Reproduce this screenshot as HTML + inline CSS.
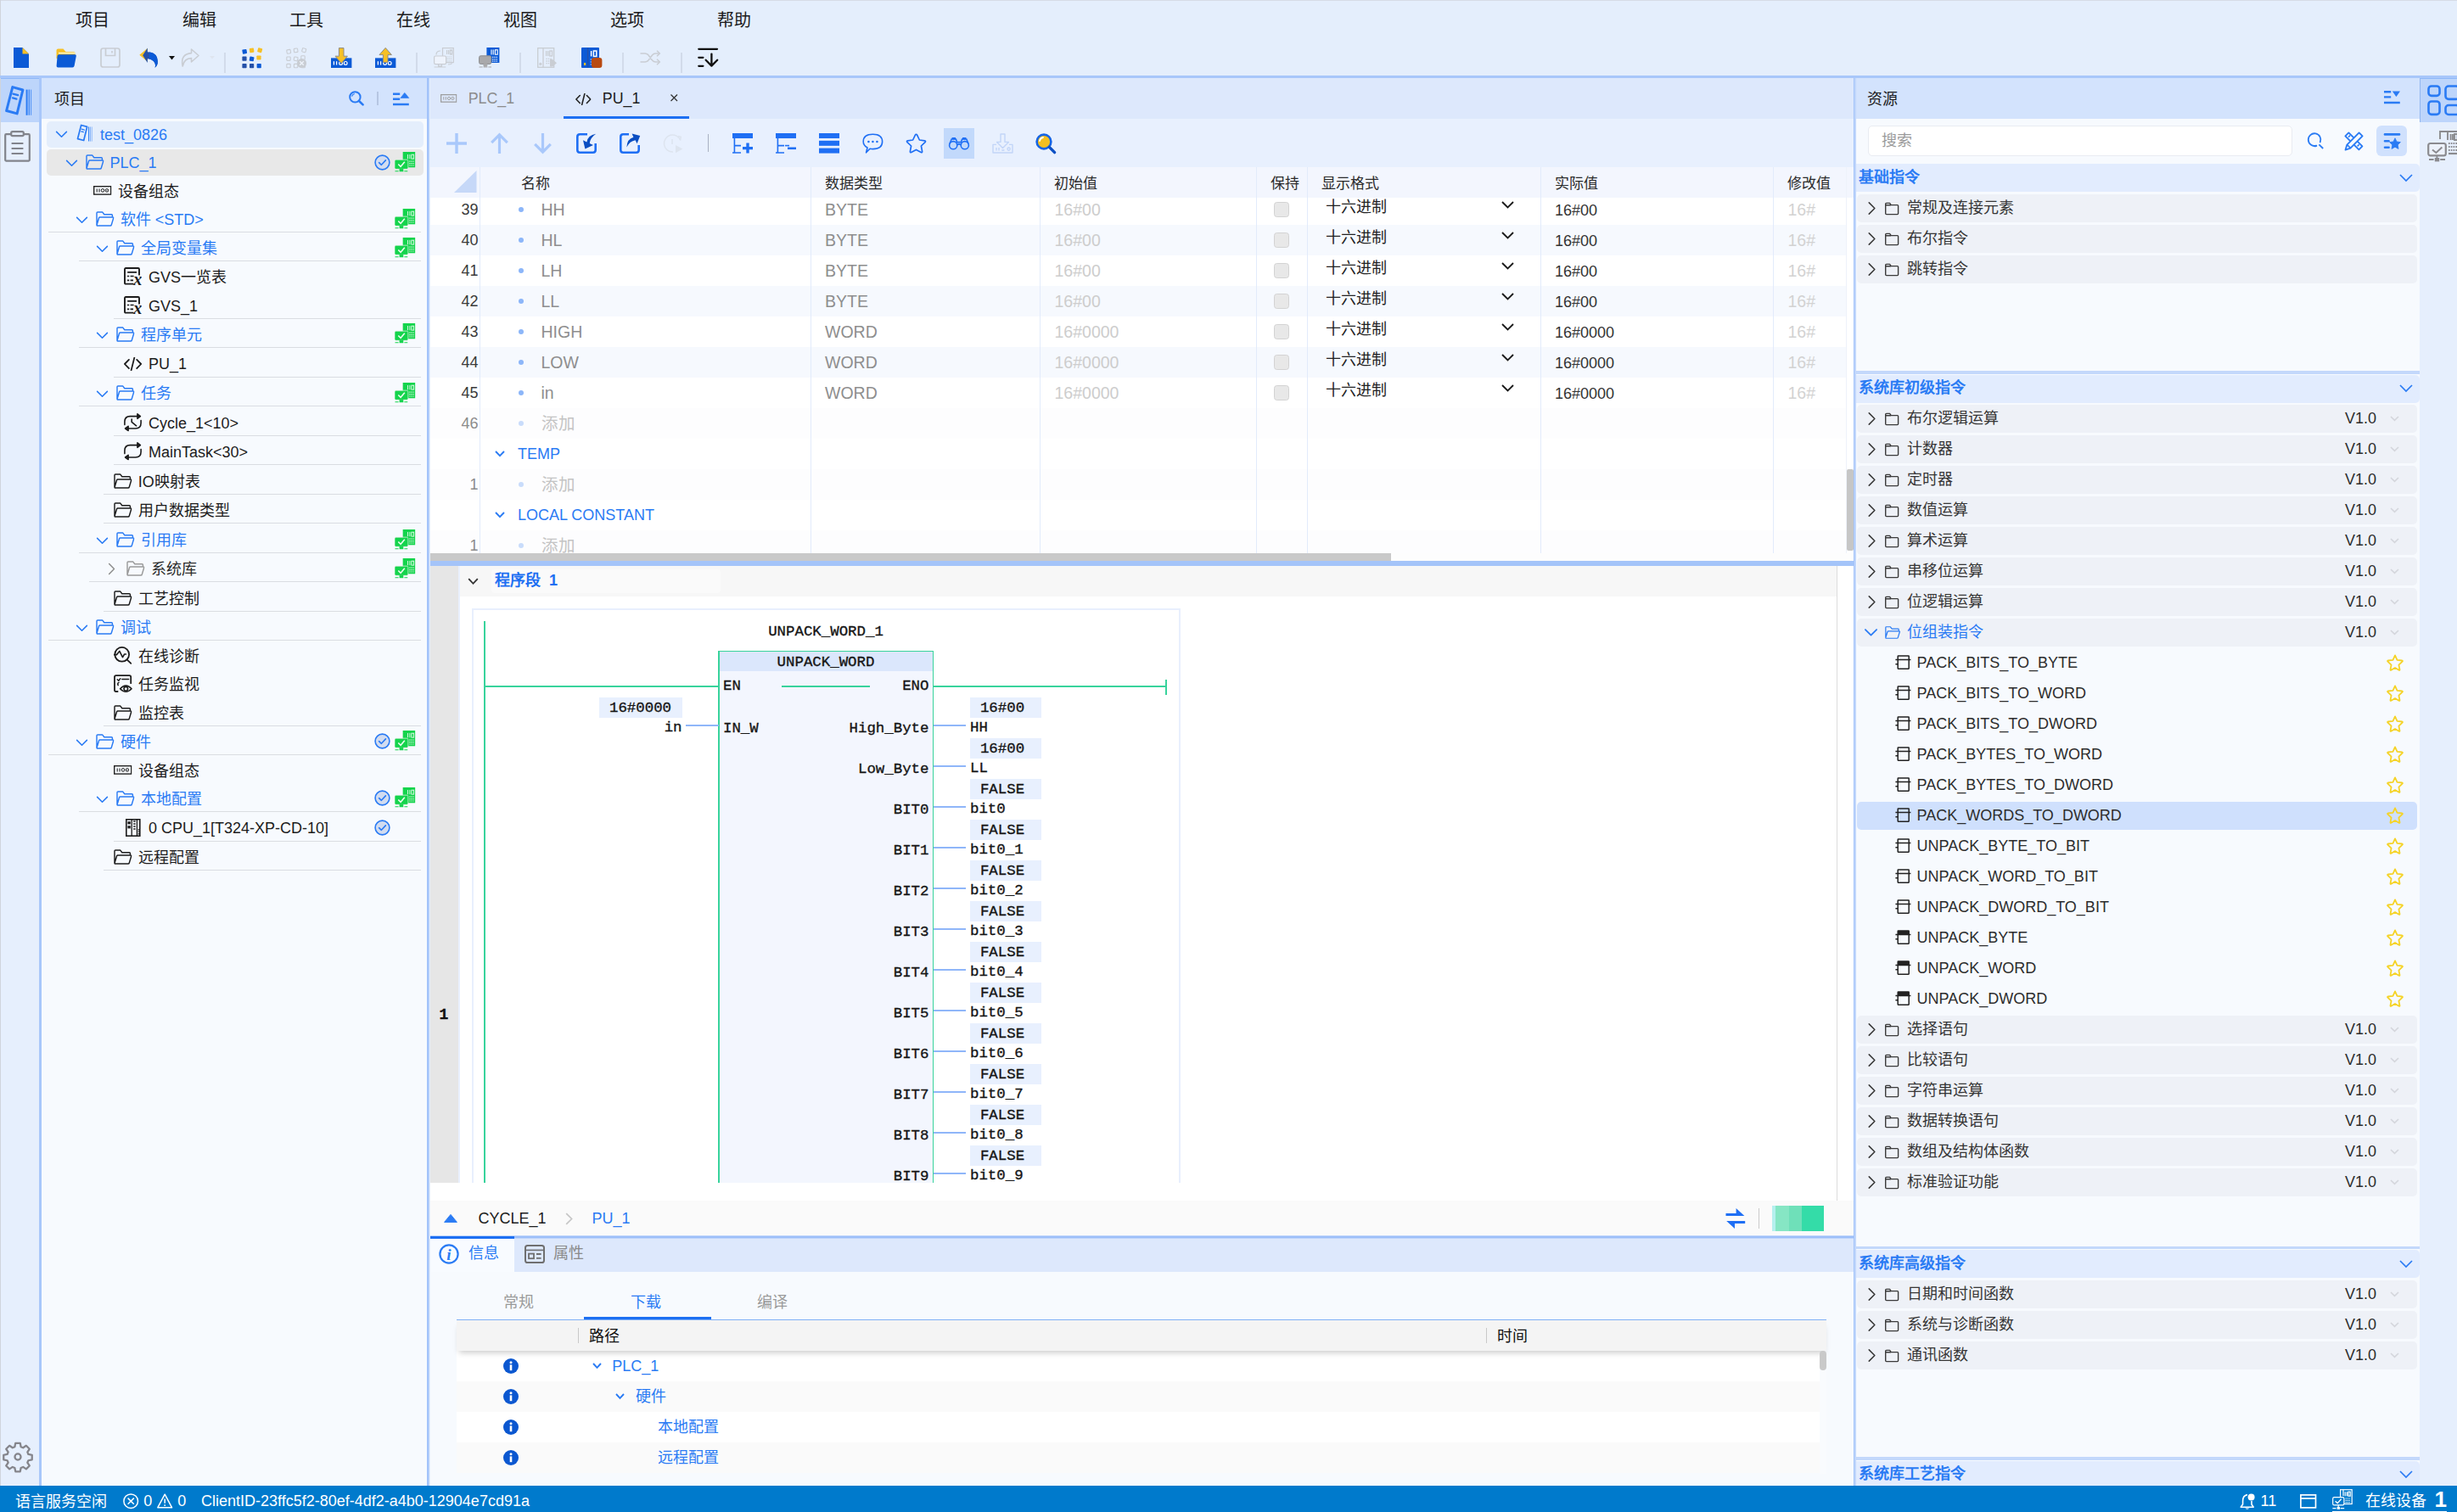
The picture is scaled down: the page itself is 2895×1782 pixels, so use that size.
<!DOCTYPE html>
<html lang="zh-CN"><head><meta charset="utf-8"><title>IDE</title><style>
html,body{margin:0;padding:0}
body{width:2895px;height:1782px;overflow:hidden;position:relative;background:#e4eefc;font-family:"Liberation Sans",sans-serif;}
div{position:absolute;box-sizing:border-box}
.t{white-space:nowrap}
.i{position:absolute;overflow:visible}
</style></head><body>
<svg width="0" height="0" style="position:absolute"><defs><symbol id="cd" viewBox="0 0 17 17"><path d="M2.6 5.4 L8.5 11.3 L14.4 5.4" fill="none" stroke="currentColor" stroke-width="1.55" stroke-linecap="round" stroke-linejoin="round"/></symbol><symbol id="cr" viewBox="0 0 17 17"><path d="M5.6 2.6 L11.5 8.5 L5.6 14.4" fill="none" stroke="currentColor" stroke-width="1.4" stroke-linecap="round" stroke-linejoin="round"/></symbol><symbol id="fo" viewBox="0 0 21.5 18"><path d="M1 16 V1.9 Q1 .9 2 .9 H7.6 L9.8 3.8 H18.4 Q19.4 3.8 19.4 4.8 V6.8 M4.7 7 H19.9 Q21 7 20.7 8 L18.3 16 Q18 17 17 17 H1.9 Q.8 17 1.1 16 L3.6 7.8 Q3.9 7 4.7 7Z" fill="none" stroke="currentColor" stroke-width="1.45" stroke-linejoin="round"/></symbol><symbol id="fc" viewBox="0 0 21 21"><path d="M3.7 16.6 V5.4 Q3.7 4.4 4.7 4.4 H8.6 L10.2 6.6 H17.6 Q18.6 6.6 18.6 7.6 V16.6 Q18.6 17.6 17.6 17.6 H4.7 Q3.7 17.6 3.7 16.6 Z M3.7 6.8 H10" fill="none" stroke="currentColor" stroke-width="1.4" stroke-linejoin="round"/></symbol><symbol id="dev" viewBox="0 0 21.5 11"><rect x=".7" y=".7" width="20" height="9.4" fill="none" stroke="currentColor" stroke-width="1.35"/><path d="M4.2 3.4v4M7 3.4v4" stroke="currentColor" stroke-width="1.05"/><circle cx="11" cy="5.4" r="1.8" fill="none" stroke="currentColor" stroke-width="1"/><circle cx="15.9" cy="5.4" r="1.8" fill="none" stroke="currentColor" stroke-width="1"/><circle cx="15.9" cy="5.4" r=".5" fill="currentColor"/></symbol><symbol id="prj" viewBox="0 0 33 37"><g fill="none" stroke="currentColor"><path d="M9.8 2.6 L21.9 6 L15.1 33.9 L2.6 30.5 Z" stroke-width="3" stroke-linejoin="round"/><path d="M10.4 10.6 L16.2 12.2 M10 15.4 L14.4 16.6" stroke-width="2.3" stroke-linecap="round"/><path d="M26.6 5.6 V35.8" stroke-width="2"/><path d="M29.3 5.6 V35.8" stroke-width="1.2"/><path d="M31.6 5.6 V35.8" stroke-width="1" opacity=".75"/></g></symbol><symbol id="prjs" viewBox="0 0 33 37"><g fill="none" stroke="currentColor"><path d="M9.8 2.6 L21.9 6 L15.1 33.9 L2.6 30.5 Z" stroke-width="3" stroke-linejoin="round"/><path d="M10.4 10.6 L16.2 12.2 M10 15.4 L14.4 16.6" stroke-width="2.3" stroke-linecap="round"/><path d="M25.4 6 V35.8" stroke-width="1.9"/><path d="M28.9 6 V35.8" stroke-width="1.7" opacity=".6"/><path d="M32 6 V35.8" stroke-width="1.6" opacity=".4"/></g></symbol><symbol id="gvs" viewBox="0 0 21 21"><g fill="none" stroke="currentColor" stroke-width="1.9"><path d="M11.4 19.6 H2.2 Q1 19.6 1 18.4 V2.2 Q1 1 2.2 1 H16.8 Q18 1 18 2.2 V9.6"/><path d="M4.2 5.8 H15 M4 10.5 h2.2 M7.6 10.5 h4 M4 15.3 h2.2 M7.6 15.3 h3.4" stroke-width="1.7"/></g><text x="11.2" y="21" font-family="Liberation Serif" font-style="italic" font-weight="bold" font-size="20" fill="currentColor">x</text></symbol><symbol id="code" viewBox="0 0 21 16"><path d="M5.9 2.9 L.9 8 L5.9 13.2 M15.2 2.9 L20.2 8 L15.2 13.2 M12.3 .6 L8.6 15.4" fill="none" stroke="currentColor" stroke-width="1.8" stroke-linecap="round" stroke-linejoin="round"/></symbol><symbol id="cyc" viewBox="0 0 21 21.5"><g fill="none" stroke="currentColor" stroke-width="1.6" stroke-linecap="round" stroke-linejoin="round"><path d="M.9 13.6 V10 Q.9 3.6 7.3 3.6 H18.8 M15.9 .9 L19.4 3.6 L15.9 6.3 Z M20.1 8.6 V11.6 Q20.1 18 13.7 18 H2.2 M5.1 15.3 L1.6 18 L5.1 20.7 Z"/><path d="M9.2 7 V10.4 L14.6 14.8" stroke-width="1.6"/></g></symbol><symbol id="loop" viewBox="0 0 21 21.5"><g fill="none" stroke="currentColor" stroke-width="1.6" stroke-linecap="round" stroke-linejoin="round"><path d="M.9 13.6 V10 Q.9 3.6 7.3 3.6 H18.8 M15.9 .9 L19.4 3.6 L15.9 6.3 Z M20.1 8.6 V11.6 Q20.1 18 13.7 18 H2.2 M5.1 15.3 L1.6 18 L5.1 20.7 Z"/></g></symbol><symbol id="diag" viewBox="0 0 21 21"><g fill="none" stroke="currentColor" stroke-width="1.8" stroke-linecap="round" stroke-linejoin="round"><circle cx="9.7" cy="9.3" r="8.4"/><path d="M15.8 15.6 L20.3 19.9"/><path d="M.6 9.6 H3.6 L6.8 5.4 L10.5 12.6 L12.6 9 H14.4" stroke-width="1.6"/></g></symbol><symbol id="mon" viewBox="0 0 22 22"><g fill="none" stroke="currentColor" stroke-width="1.8" stroke-linecap="round" stroke-linejoin="round"><path d="M4.6 20 H2.8 Q1 20 1 18.2 V2.9 Q1 1.1 2.8 1.1 H18.4 Q20.2 1.1 20.2 2.9 V10.2"/><path d="M4.2 5.8 L5.8 7.2 L7.8 4.8 M9.8 5.6 H17.6 M6 9.4 Q4 10.4 5.2 12.6" stroke-width="1.5"/><path d="M7.6 16.7 Q14.3 9.6 21 16.7 Q14.3 23.8 7.6 16.7Z" stroke-width="1.6"/><circle cx="14.3" cy="16.7" r="2.3" stroke-width="1.6"/></g></symbol><symbol id="cpu" viewBox="0 0 18 21"><g fill="none" stroke="currentColor" stroke-width="1.6"><rect x=".8" y=".8" width="16" height="19.4"/><path d="M7.2 .8 V20.2 M13.4 .8 V20.2" stroke-width="1.3"/><path d="M9.2 3 h2.4 M9.2 6 h2.4 M9.2 9 h2.4 M9.2 12 h2.4 M14.6 13 h2 M14.6 15.4 h2 M14.6 17.8 h2" stroke-width="1.4"/></g><rect x="2.4" y="3.2" width="3.4" height="3.2" fill="currentColor"/><rect x="2.4" y="8.2" width="3.4" height="3.2" fill="currentColor"/></symbol><symbol id="ck" viewBox="0 0 19 19"><circle cx="9.5" cy="9.5" r="8.4" fill="#d2dcf0" stroke="#2a7bf4" stroke-width="1.6"/><path d="M5.6 9.7 L8.4 12.3 L13.4 6.9" fill="none" stroke="#2a7bf4" stroke-width="1.6" stroke-linecap="round" stroke-linejoin="round"/></symbol><symbol id="grn" viewBox="0 0 24 24"><rect x="9.5" y="0" width="14.5" height="18" fill="#14d44c"/><path d="M15.2 3 V8.2 M17.6 3 V8.2" stroke="#d9f7e2" stroke-width="1"/><rect x="19.6" y="3.2" width="2.6" height="4.8" fill="none" stroke="#d9f7e2" stroke-width="1"/><path d="M17 11 H22.4 M17 13.4 H22.4 M17 15.8 H22.4" stroke="#d9f7e2" stroke-width="1.1" stroke-dasharray="1.3 .8"/><rect x="0" y="9" width="15.6" height="11" rx="1.6" fill="#14d44c" stroke="#eaf3ea" stroke-width=".7"/><path d="M4.2 14.2 L7 17 L11.6 11.6" fill="none" stroke="#eefcf0" stroke-width="1.5"/><path d="M6 20 h3.6 v2.2 h-3.6z M0.5 22.4 H4.5 M5.5 22.4 H10.2 M11.2 22.4 H15" fill="#14d44c" stroke="#14d44c" stroke-width="1"/></symbol></defs></svg>
<div style="left:0px;top:0px;width:2895px;height:90px;background:#e4eefc;"></div>
<div style="left:0px;top:0px;width:2895px;height:1px;background:#d6dbe6;"></div>
<div style="left:0px;top:0px;width:1px;height:1782px;background:#d0d4dc;"></div>
<div style="left:0px;top:89px;width:2895px;height:3.2px;background:#a8c7fa;"></div>
<div class="t" style="top:10.5px;font-size:20px;line-height:26px;color:#1b1b1b;left:109px;transform:translateX(-50%);">项目</div>
<div class="t" style="top:10.5px;font-size:20px;line-height:26px;color:#1b1b1b;left:235px;transform:translateX(-50%);">编辑</div>
<div class="t" style="top:10.5px;font-size:20px;line-height:26px;color:#1b1b1b;left:361px;transform:translateX(-50%);">工具</div>
<div class="t" style="top:10.5px;font-size:20px;line-height:26px;color:#1b1b1b;left:487px;transform:translateX(-50%);">在线</div>
<div class="t" style="top:10.5px;font-size:20px;line-height:26px;color:#1b1b1b;left:613px;transform:translateX(-50%);">视图</div>
<div class="t" style="top:10.5px;font-size:20px;line-height:26px;color:#1b1b1b;left:739px;transform:translateX(-50%);">选项</div>
<div class="t" style="top:10.5px;font-size:20px;line-height:26px;color:#1b1b1b;left:865px;transform:translateX(-50%);">帮助</div>
<svg class="i" style="left:16px;top:56px;" width="18" height="24" viewBox="0 0 18 24"><path d="M0 0 H10.5 L18 7.5 V24 H0 Z" fill="#0b5ad6"/><path d="M10.5 0 L18 7.5 H10.5 Z" fill="#f6c026"/></svg>
<svg class="i" style="left:66px;top:57px;" width="24" height="23" viewBox="0 0 24 23"><path d="M0.5 2.5 Q0.5 0.5 2.5 0.5 H8.5 L11.5 4 H21 Q22.5 4 22.5 5.5 V12 H0.5 Z" fill="#f6c026"/><path d="M3 5.6 H22.5" stroke="#fff7d6" stroke-width="1.6"/><path d="M3.4 7.2 H22.4 Q24.2 7.2 23.8 9 L21.6 20.6 Q21.2 22.5 19.4 22.5 H2.4 Q0.4 22.5 0.6 20.5 L1.6 9 Q1.8 7.2 3.4 7.2 Z" fill="#0b5ad6"/></svg>
<svg class="i" style="left:118px;top:56px;" width="24" height="24" viewBox="0 0 24 24"><g fill="none" stroke="#c9cdd3" stroke-width="1.7"><rect x="1" y="1" width="22" height="22" rx="2.6"/><path d="M6.5 1 V9.5 H17.5 V1"/><path d="M14 4 V6.5"/></g></svg>
<svg class="i" style="left:164px;top:56px;" width="23" height="24" viewBox="0 0 23 24"><path d="M.3 8.8 L9.6 1 V16.6 Z" fill="#f6c026"/><path d="M4.2 9.2 L9.8 0.4 V5.2 Q21.5 5.6 21.8 16.5 Q22 21 18.6 23.8 Q20 19.5 17 16.2 Q14.4 13.4 9.8 13.2 V18 Z" fill="#2450a8"/><path d="M12 5.4 Q21.5 6.2 21.8 16.5 Q22 21 18.6 23.8 Q20 19.5 17 16.2 Q15.5 14.4 12 13.4Z" fill="#0b5ad6"/></svg>
<svg class="i" style="left:198.5px;top:65.5px;" width="7" height="5" viewBox="0 0 7 5"><path d="M0 0 H7 L3.5 4.6 Z" fill="#111"/></svg>
<svg class="i" style="left:213px;top:57px;" width="22" height="22" viewBox="0 0 22 22"><path d="M12.5 1 L21 8.5 L12.5 16 V11.6 Q4 11.6 2.2 21 Q-0.8 6.6 12.5 5.6 Z" fill="none" stroke="#c9cdd3" stroke-width="1.6" stroke-linejoin="round"/></svg>
<svg class="i" style="left:247px;top:66px;" width="6" height="4" viewBox="0 0 6 4"><path d="M0 0 H6 L3 3.6 Z" fill="#dfe5ef"/></svg>
<div style="left:263.5px;top:62px;width:2px;height:24px;background:#d2dbea;"></div>
<svg class="i" style="left:284.5px;top:56px;" width="25" height="25" viewBox="0 0 25 25"><rect x="0.6" y="2.2" width="5.2" height="5.2" rx=".8" fill="#0b5ad6" transform="rotate(-10 3.2 4.800000000000001)"/><rect x="9" y="0.8" width="5.2" height="5.2" rx=".8" fill="#f6c026" transform="rotate(-8 11.6 3.4000000000000004)"/><rect x="18.6" y="0.6" width="5.2" height="5.2" rx=".8" fill="#f6c026" transform="rotate(15 21.200000000000003 3.2)"/><rect x="0.4" y="10.6" width="5.2" height="5.2" rx=".8" fill="#2450a8" transform="rotate(0 3.0 13.2)"/><rect x="9" y="10.8" width="5.2" height="5.2" rx=".8" fill="#0b5ad6" transform="rotate(10 11.6 13.4)"/><rect x="17.4" y="9.4" width="5.2" height="5.2" rx=".8" fill="#f6c026" transform="rotate(0 20.0 12.0)"/><rect x="0.4" y="19" width="5.2" height="5.2" rx=".8" fill="#2450a8" transform="rotate(0 3.0 21.6)"/><rect x="9" y="19" width="5.2" height="5.2" rx=".8" fill="#2450a8" transform="rotate(0 11.6 21.6)"/><rect x="17.6" y="19" width="5.2" height="5.2" rx=".8" fill="#0b5ad6" transform="rotate(0 20.200000000000003 21.6)"/></svg>
<svg class="i" style="left:337px;top:56px;" width="25" height="25" viewBox="0 0 25 25"><rect x="1.0" y="2.6" width="4.4" height="4.4" rx=".8" fill="none" stroke="#c9cdd3" stroke-width="1.1" transform="rotate(-10 3.2 4.800000000000001)"/><rect x="9.4" y="1.2000000000000002" width="4.4" height="4.4" rx=".8" fill="none" stroke="#c9cdd3" stroke-width="1.1" transform="rotate(-8 11.6 3.4000000000000004)"/><rect x="19.0" y="1.0" width="4.4" height="4.4" rx=".8" fill="none" stroke="#c9cdd3" stroke-width="1.1" transform="rotate(15 21.200000000000003 3.2)"/><rect x="0.8" y="11.0" width="4.4" height="4.4" rx=".8" fill="none" stroke="#c9cdd3" stroke-width="1.1" transform="rotate(0 3.0 13.2)"/><rect x="9.4" y="11.200000000000001" width="4.4" height="4.4" rx=".8" fill="none" stroke="#c9cdd3" stroke-width="1.1" transform="rotate(10 11.6 13.4)"/><rect x="17.799999999999997" y="9.8" width="4.4" height="4.4" rx=".8" fill="none" stroke="#c9cdd3" stroke-width="1.1" transform="rotate(0 20.0 12.0)"/><rect x="0.8" y="19.4" width="4.4" height="4.4" rx=".8" fill="none" stroke="#c9cdd3" stroke-width="1.1" transform="rotate(0 3.0 21.6)"/><rect x="9.4" y="19.4" width="4.4" height="4.4" rx=".8" fill="none" stroke="#c9cdd3" stroke-width="1.1" transform="rotate(0 11.6 21.6)"/><rect x="18.0" y="19.4" width="4.4" height="4.4" rx=".8" fill="none" stroke="#c9cdd3" stroke-width="1.1" transform="rotate(0 20.200000000000003 21.6)"/><circle cx="18.5" cy="18.5" r="5.6" fill="#c9cdd3"/><path d="M16.2 16.2 L20.8 20.8 M20.8 16.2 L16.2 20.8" stroke="#eef3fb" stroke-width="1.3"/></svg>
<svg class="i" style="left:389.7px;top:56px;" width="25" height="24" viewBox="0 0 25 24"><rect x="0" y="12.4" width="24.4" height="11.6" fill="#0b5ad6"/><path d="M3.4 16.2v4.4M6.6 16.2v4.4" stroke="#fff" stroke-width="1.3"/><circle cx="17.2" cy="18.4" r="1.9" fill="none" stroke="#fff" stroke-width="1.2"/><circle cx="11.6" cy="18.4" r="1.9" fill="none" stroke="#fff" stroke-width="1.2"/><path d="M12.2 18.6 L19.4 10.2 H15 V0.6 H9.4 V10.2 H5 Z" fill="#f6c026" stroke="#8d8a86" stroke-width="1" stroke-linejoin="round"/></svg>
<svg class="i" style="left:441.8px;top:56px;" width="25" height="24" viewBox="0 0 25 24"><rect x="0" y="12.4" width="24.4" height="11.6" fill="#0b5ad6"/><path d="M3.4 16.2v4.4M6.6 16.2v4.4" stroke="#fff" stroke-width="1.3"/><circle cx="17.2" cy="18.4" r="1.9" fill="none" stroke="#fff" stroke-width="1.2"/><circle cx="11.6" cy="18.4" r="1.9" fill="none" stroke="#fff" stroke-width="1.2"/><path d="M12.2 0.4 L19.4 8.6 H15 V17.4 H9.4 V8.6 H5 Z" fill="#f6c026" stroke="#8d8a86" stroke-width="1" stroke-linejoin="round"/></svg>
<div style="left:490px;top:62px;width:2px;height:24px;background:#d2dbea;"></div>
<svg class="i" style="left:511px;top:56px;" width="24" height="24" viewBox="0 0 24 24"><g fill="none" stroke="#c9cdd3" stroke-width="1.2"><rect x="10.5" y=".6" width="12.8" height="17"/><path d="M15.6 3v5M17.6 3v5"/><rect x="19.4" y="3" width="2.2" height="5"/><path d="M15.5 11h6.4M15.5 13.4h6.4M15.5 15.8h6.4" stroke-dasharray="1.2 .9"/><rect x=".6" y="10" width="14" height="9.6" rx="1.6" fill="#eef3fc"/><path d="M5.6 19.6 v2.6 h3.8 v-2.6 M.6 23h13.6" /><path d="M3 8.5 Q3 4 8 4 M17 20 q4 0 4.6-1.6"/></g></svg>
<svg class="i" style="left:564px;top:56px;" width="25" height="24" viewBox="0 0 25 24"><rect x="9.4" y="0" width="15" height="18" fill="#0b5ad6"/><path d="M15 2.6v6M17.2 2.6v6" stroke="#fff" stroke-width="1.1"/><rect x="19.4" y="2.8" width="2.8" height="5.4" fill="none" stroke="#fff" stroke-width="1.1"/><path d="M16 11.4h6.8M16 13.8h6.8M16 16.2h6.8" stroke="#dfe9fb" stroke-width="1.2" stroke-dasharray="1.4 .9"/><rect x=".6" y="9.8" width="14.2" height="9.6" rx="1.8" fill="#a9a9ab" stroke="#8c8c8e" stroke-width="1"/><path d="M6 19.6h3.8v2.6H6z M.6 23h4M5.6 23h4.8M11.4 23h3.6" fill="#a9a9ab" stroke="#a9a9ab" stroke-width="1"/></svg>
<div style="left:611.6px;top:62px;width:2px;height:24px;background:#d2dbea;"></div>
<svg class="i" style="left:633px;top:56px;" width="25" height="24" viewBox="0 0 25 24"><g fill="none" stroke="#c9cdd3" stroke-width="1.3"><rect x=".7" y=".7" width="19" height="22.6"/><path d="M7 .7V23.3"/><path d="M10.6 4v6M12.8 4v6"/><rect x="14.8" y="4" width="2.8" height="6"/><path d="M10.4 13.4h7.6M10.4 16h5M10.4 18.6h5" stroke-dasharray="1.4 1"/><circle cx="3.8" cy="19.4" r="1"/></g><path d="M15 14 h3 l5 4.2 l-5 4.2 h-3z" fill="#c9cdd3"/></svg>
<svg class="i" style="left:685px;top:56px;" width="25" height="24" viewBox="0 0 25 24"><rect x="0" y="0" width="21" height="24" rx="1" fill="#0b5ad6"/><path d="M7.6 .5V23.5" stroke="#2450a8" stroke-width="1.4"/><path d="M11.6 4v6.4" stroke="#fff" stroke-width="1.5"/><rect x="14.4" y="4" width="3.4" height="6.4" fill="none" stroke="#fff" stroke-width="1.5"/><path d="M10.6 14h3M10.6 17h3M10.6 20h3" stroke="#dfe9fb" stroke-width="1.2" stroke-dasharray="1.2 .8"/><rect x="3" y="18" width="2.2" height="3" fill="#f6c026"/><rect x="12" y="12" width="12.4" height="12" rx="3" fill="#b84a12"/></svg>
<div style="left:733px;top:62px;width:2px;height:24px;background:#d2dbea;"></div>
<svg class="i" style="left:753.5px;top:59px;" width="25" height="18" viewBox="0 0 25 18"><g fill="none" stroke="#c9cdd3" stroke-width="1.5" stroke-linejoin="round"><path d="M.5 4h5.5q2.4 0 4 2l4.5 6q1.6 2 4 2h4.5M.5 14h5.5q2.4 0 4-2l4.5-6q1.6-2 4-2h4.5"/><path d="M20 .8l3.4 3.2-3.4 3.2M20 10.8l3.4 3.2-3.4 3.2"/></g></svg>
<div style="left:802px;top:62px;width:2px;height:24px;background:#d2dbea;"></div>
<svg class="i" style="left:821.5px;top:56px;" width="25" height="24" viewBox="0 0 25 24"><g fill="none" stroke="#111" stroke-width="2.3" stroke-linecap="round" stroke-linejoin="round"><path d="M1.3 1.8H23M1.3 11.8H6.4M1.3 21.8H6.4"/><path d="M16.4 7.6V21.4M9.6 14.8l6.8 6.8 6.8-6.8"/></g></svg>
<div style="left:1px;top:92.2px;width:45px;height:1658.8px;background:#e6effd;"></div>
<div style="left:1px;top:92.2px;width:45px;height:51.5px;background:#bdd5fb;"></div>
<div style="left:1px;top:92.2px;width:45px;height:1px;background:#8fb9f7;"></div>
<div style="left:46px;top:92.2px;width:3px;height:1658.8px;background:#a8c7fa;"></div>
<svg class="i" style="left:5px;top:100px;color:#2a7bf4" width="33" height="37"><use href="#prj"/></svg>
<svg class="i" style="left:5px;top:154px;" width="31" height="37" viewBox="0 0 31 37"><g fill="none" stroke="#82848c" stroke-width="2.2"><path d="M8 4.2H2.2Q1.2 4.2 1.2 5.2V34.6Q1.2 35.6 2.2 35.6H28.8Q29.8 35.6 29.8 34.6V5.2Q29.8 4.2 28.8 4.2H23"/><rect x="8.2" y="1.2" width="14.6" height="5" rx="1.6"/><path d="M8.6 15H22.4M8.6 21H22.4M8.6 27H22.4"/></g></svg>
<svg class="i" style="left:3px;top:1698.6px;transform:scale(.985)" width="36" height="36" viewBox="0 0 36 36"><g fill="none" stroke="#85858b" stroke-width="2.3"><circle cx="18" cy="18" r="3.6"/><path d="M15.2 1.6h5.6l.9 4.4 2.6 1.1 3.7-2.5 4 4-2.5 3.7 1.1 2.6 4.4.9v5.6l-4.4.9-1.1 2.6 2.5 3.7-4 4-3.7-2.5-2.6 1.1-.9 4.4h-5.6l-.9-4.4-2.6-1.1-3.7 2.5-4-4 2.5-3.7-1.1-2.6-4.4-.9v-5.6l4.4-.9 1.1-2.6-2.5-3.7 4-4 3.7 2.5 2.6-1.1z" stroke-linejoin="round"/></g></svg>
<div style="left:49px;top:92.2px;width:454.5px;height:1658.8px;background:#f7fafe;"></div>
<div style="left:49px;top:92.2px;width:454.5px;height:47.5px;background:#d3e3fd;"></div>
<div class="t" style="top:105.8px;font-size:18px;line-height:23px;color:#1b1b1b;left:64px;">项目</div>
<svg class="i" style="left:411px;top:106.5px;" width="18" height="17" viewBox="0 0 18 17"><g fill="none" stroke="#2a7bf4" stroke-width="2"><circle cx="7.4" cy="7.4" r="6.2"/><path d="M12 12L16.6 16.4" stroke-width="2.6" stroke-linecap="round"/><path d="M3.6 6.6Q4.2 4 6.8 3.5" stroke-width="1.2"/></g></svg>
<div style="left:444px;top:108px;width:1.5px;height:16px;background:#b6c6e2;"></div>
<svg class="i" style="left:463px;top:108.5px;" width="19" height="15.5" viewBox="0 0 19 15.5"><path d="M0 .4H8.2V3H0zM0 6.4H8.2V9H0zM0 12.7H18.8V15.3H0z" fill="#2a7bf4"/><path d="M8.9 6.5L13.4 .7Q13.8 .2 14.2 .7L18.8 6.5z" fill="#2a7bf4" stroke="#2a7bf4" stroke-width=".6" stroke-linejoin="round"/></svg>
<div style="left:503.4px;top:92.2px;width:1.7px;height:1658.8px;background:#a2c3fa;"></div>
<div style="left:505.1px;top:92.2px;width:1.4px;height:1658.8px;background:#bdd4fb;"></div>
<div style="left:506.5px;top:92.2px;width:0.5px;height:1658.8px;background:#eef4fe;"></div>
<div style="left:55px;top:142.5px;width:444px;height:31px;background:#e4eefc;border-radius:5px;"></div>
<div style="left:55px;top:175.5px;width:444px;height:31.5px;background:#e8e8e8;border-radius:5px;"></div>
<svg class="i" style="left:63.8px;top:150.2px;color:#2a7bf4" width="17" height="17"><use href="#cd"/></svg>
<svg class="i" style="left:89.5px;top:146.39999999999998px;color:#2a7bf4" width="19" height="21.3"><use href="#prjs"/></svg>
<div class="t" style="top:147.5px;font-size:18px;line-height:23px;color:#2a7bf4;left:118px;">test_0826</div>
<svg class="i" style="left:75.8px;top:183.8px;color:#2a7bf4" width="17" height="17"><use href="#cd"/></svg>
<svg class="i" style="left:101px;top:181.9px;color:#2a7bf4" width="21.5" height="18"><use href="#fo"/></svg>
<div class="t" style="top:181.1px;font-size:18px;line-height:23px;color:#2a7bf4;left:129.5px;">PLC_1</div>
<svg class="i" style="left:440.5px;top:181.5px;" width="19" height="19"><use href="#ck"/></svg>
<svg class="i" style="left:465px;top:178.70000000000002px;" width="24.4" height="24.4"><use href="#grn"/></svg>
<svg class="i" style="left:109.7px;top:218.8px;color:#1c1c1c" width="21.5" height="11"><use href="#dev"/></svg>
<div class="t" style="top:214.8px;font-size:18px;line-height:23px;color:#1c1c1c;left:139.3px;">设备组态</div>
<svg class="i" style="left:88.1px;top:250.89999999999998px;color:#2a7bf4" width="17" height="17"><use href="#cd"/></svg>
<svg class="i" style="left:113px;top:248.99999999999997px;color:#2a7bf4" width="21.5" height="18"><use href="#fo"/></svg>
<div class="t" style="top:248.2px;font-size:18px;line-height:23px;color:#2a7bf4;left:141.8px;">软件 &lt;STD&gt;</div>
<svg class="i" style="left:465px;top:245.79999999999998px;" width="24.4" height="24.4"><use href="#grn"/></svg>
<div style="left:57px;top:273px;width:438.5px;height:1px;background:#dadde2;"></div>
<svg class="i" style="left:112.1px;top:284.7px;color:#2a7bf4" width="17" height="17"><use href="#cd"/></svg>
<svg class="i" style="left:136.8px;top:282.8px;color:#2a7bf4" width="21.5" height="18"><use href="#fo"/></svg>
<div class="t" style="top:282.0px;font-size:18px;line-height:23px;color:#2a7bf4;left:166px;">全局变量集</div>
<svg class="i" style="left:465px;top:279.59999999999997px;" width="24.4" height="24.4"><use href="#grn"/></svg>
<div style="left:92.5px;top:307px;width:403.0px;height:1px;background:#dadde2;"></div>
<svg class="i" style="left:146px;top:314.79999999999995px;color:#1c1c1c" width="21" height="21"><use href="#gvs"/></svg>
<div class="t" style="top:316.2px;font-size:18px;line-height:23px;color:#1c1c1c;left:175px;">GVS一览表</div>
<svg class="i" style="left:146px;top:348.59999999999997px;color:#1c1c1c" width="21" height="21"><use href="#gvs"/></svg>
<div class="t" style="top:350.0px;font-size:18px;line-height:23px;color:#1c1c1c;left:175px;">GVS_1</div>
<div style="left:134px;top:375px;width:361.5px;height:1px;background:#dadde2;"></div>
<svg class="i" style="left:112.3px;top:386.5px;color:#2a7bf4" width="17" height="17"><use href="#cd"/></svg>
<svg class="i" style="left:137px;top:384.6px;color:#2a7bf4" width="21.5" height="18"><use href="#fo"/></svg>
<div class="t" style="top:383.8px;font-size:18px;line-height:23px;color:#2a7bf4;left:166px;">程序单元</div>
<svg class="i" style="left:465px;top:381.4px;" width="24.4" height="24.4"><use href="#grn"/></svg>
<div style="left:92.5px;top:409px;width:403.0px;height:1px;background:#dadde2;"></div>
<svg class="i" style="left:146px;top:421.1px;color:#1c1c1c" width="21" height="16"><use href="#code"/></svg>
<div class="t" style="top:418.4px;font-size:18px;line-height:23px;color:#1c1c1c;left:175px;">PU_1</div>
<div style="left:134px;top:444px;width:361.5px;height:1px;background:#dadde2;"></div>
<svg class="i" style="left:112.3px;top:455.7px;color:#2a7bf4" width="17" height="17"><use href="#cd"/></svg>
<svg class="i" style="left:137px;top:453.8px;color:#2a7bf4" width="21.5" height="18"><use href="#fo"/></svg>
<div class="t" style="top:453.0px;font-size:18px;line-height:23px;color:#2a7bf4;left:166px;">任务</div>
<svg class="i" style="left:465px;top:450.59999999999997px;" width="24.4" height="24.4"><use href="#grn"/></svg>
<div style="left:92.5px;top:478px;width:403.0px;height:1px;background:#dadde2;"></div>
<svg class="i" style="left:146px;top:486.9px;color:#1c1c1c" width="21" height="21.5"><use href="#cyc"/></svg>
<div class="t" style="top:488.0px;font-size:18px;line-height:23px;color:#1c1c1c;left:175px;">Cycle_1&lt;10&gt;</div>
<div style="left:134px;top:513px;width:361.5px;height:1px;background:#dadde2;"></div>
<svg class="i" style="left:146px;top:520.7px;color:#1c1c1c" width="21" height="21.5"><use href="#loop"/></svg>
<div class="t" style="top:521.8px;font-size:18px;line-height:23px;color:#1c1c1c;left:175px;">MainTask&lt;30&gt;</div>
<div style="left:134px;top:547px;width:361.5px;height:1px;background:#dadde2;"></div>
<svg class="i" style="left:133.9px;top:557.6px;color:#1c1c1c" width="21.5" height="18"><use href="#fo"/></svg>
<div class="t" style="top:556.8px;font-size:18px;line-height:23px;color:#1c1c1c;left:162.8px;">IO映射表</div>
<div style="left:122px;top:582px;width:373.5px;height:1px;background:#dadde2;"></div>
<svg class="i" style="left:133.9px;top:591.9px;color:#1c1c1c" width="21.5" height="18"><use href="#fo"/></svg>
<div class="t" style="top:591.1px;font-size:18px;line-height:23px;color:#1c1c1c;left:162.8px;">用户数据类型</div>
<div style="left:122px;top:616px;width:373.5px;height:1px;background:#dadde2;"></div>
<svg class="i" style="left:112.3px;top:629.1px;color:#2a7bf4" width="17" height="17"><use href="#cd"/></svg>
<svg class="i" style="left:137px;top:627.2px;color:#2a7bf4" width="21.5" height="18"><use href="#fo"/></svg>
<div class="t" style="top:626.4px;font-size:18px;line-height:23px;color:#2a7bf4;left:166px;">引用库</div>
<svg class="i" style="left:465px;top:624.0px;" width="24.4" height="24.4"><use href="#grn"/></svg>
<div style="left:92.5px;top:651px;width:403.0px;height:1px;background:#dadde2;"></div>
<svg class="i" style="left:122.5px;top:661.9px;color:#8a8a8a" width="17" height="17"><use href="#cr"/></svg>
<svg class="i" style="left:148.5px;top:661.0px;color:#9a9a9a" width="21.5" height="18"><use href="#fo"/></svg>
<div class="t" style="top:660.2px;font-size:18px;line-height:23px;color:#2a2a2a;left:178px;">系统库</div>
<svg class="i" style="left:465px;top:657.8px;" width="24.4" height="24.4"><use href="#grn"/></svg>
<div style="left:104.5px;top:685px;width:391.0px;height:1px;background:#dadde2;"></div>
<svg class="i" style="left:133.9px;top:695.6px;color:#1c1c1c" width="21.5" height="18"><use href="#fo"/></svg>
<div class="t" style="top:694.8px;font-size:18px;line-height:23px;color:#1c1c1c;left:162.8px;">工艺控制</div>
<div style="left:122px;top:720px;width:373.5px;height:1px;background:#dadde2;"></div>
<svg class="i" style="left:88.1px;top:732.1px;color:#2a7bf4" width="17" height="17"><use href="#cd"/></svg>
<svg class="i" style="left:113px;top:730.2px;color:#2a7bf4" width="21.5" height="18"><use href="#fo"/></svg>
<div class="t" style="top:729.4px;font-size:18px;line-height:23px;color:#2a7bf4;left:141.8px;">调试</div>
<div style="left:57px;top:754px;width:438.5px;height:1px;background:#dadde2;"></div>
<svg class="i" style="left:133.9px;top:761.9px;color:#1c1c1c" width="21" height="21"><use href="#diag"/></svg>
<div class="t" style="top:762.8px;font-size:18px;line-height:23px;color:#1c1c1c;left:162.8px;">在线诊断</div>
<svg class="i" style="left:133.9px;top:794.6999999999999px;color:#1c1c1c" width="22" height="22"><use href="#mon"/></svg>
<div class="t" style="top:796.2px;font-size:18px;line-height:23px;color:#1c1c1c;left:162.8px;">任务监视</div>
<svg class="i" style="left:133.9px;top:830.6px;color:#1c1c1c" width="21.5" height="18"><use href="#fo"/></svg>
<div class="t" style="top:829.8px;font-size:18px;line-height:23px;color:#1c1c1c;left:162.8px;">监控表</div>
<div style="left:122px;top:855px;width:373.5px;height:1px;background:#dadde2;"></div>
<svg class="i" style="left:88.1px;top:866.5px;color:#2a7bf4" width="17" height="17"><use href="#cd"/></svg>
<svg class="i" style="left:113px;top:864.6px;color:#2a7bf4" width="21.5" height="18"><use href="#fo"/></svg>
<div class="t" style="top:863.8px;font-size:18px;line-height:23px;color:#2a7bf4;left:141.8px;">硬件</div>
<svg class="i" style="left:440.5px;top:864.2px;" width="19" height="19"><use href="#ck"/></svg>
<svg class="i" style="left:465px;top:861.4px;" width="24.4" height="24.4"><use href="#grn"/></svg>
<div style="left:57px;top:889px;width:438.5px;height:1px;background:#dadde2;"></div>
<svg class="i" style="left:134px;top:901.8px;color:#1c1c1c" width="21.5" height="11"><use href="#dev"/></svg>
<div class="t" style="top:897.8px;font-size:18px;line-height:23px;color:#1c1c1c;left:162.8px;">设备组态</div>
<svg class="i" style="left:112.3px;top:933.5px;color:#2a7bf4" width="17" height="17"><use href="#cd"/></svg>
<svg class="i" style="left:137px;top:931.6px;color:#2a7bf4" width="21.5" height="18"><use href="#fo"/></svg>
<div class="t" style="top:930.8px;font-size:18px;line-height:23px;color:#2a7bf4;left:166px;">本地配置</div>
<svg class="i" style="left:440.5px;top:931.2px;" width="19" height="19"><use href="#ck"/></svg>
<svg class="i" style="left:465px;top:928.4px;" width="24.4" height="24.4"><use href="#grn"/></svg>
<div style="left:92.5px;top:956px;width:403.0px;height:1px;background:#dadde2;"></div>
<svg class="i" style="left:147.5px;top:964.5999999999999px;color:#1c1c1c" width="18" height="21"><use href="#cpu"/></svg>
<div class="t" style="top:965.1px;font-size:18px;line-height:23px;color:#1c1c1c;left:175px;">0 CPU_1[T324-XP-CD-10]</div>
<svg class="i" style="left:440.5px;top:965.5px;" width="19" height="19"><use href="#ck"/></svg>
<div style="left:134px;top:991px;width:361.5px;height:1px;background:#dadde2;"></div>
<svg class="i" style="left:133.9px;top:1000.9px;color:#1c1c1c" width="21.5" height="18"><use href="#fo"/></svg>
<div class="t" style="top:1000.1px;font-size:18px;line-height:23px;color:#1c1c1c;left:162.8px;">远程配置</div>
<div style="left:122px;top:1025px;width:373.5px;height:1px;background:#dadde2;"></div>
<div style="left:507px;top:92.2px;width:1676.5px;height:47.8px;background:#dde8fc;"></div>
<div style="left:507px;top:140px;width:1676.5px;height:57px;background:#e8f0fe;"></div>
<svg class="i" style="left:518.5px;top:111px;color:#9b9b9b" width="19.5" height="10"><use href="#dev"/></svg>
<div class="t" style="top:104.5px;font-size:17.8px;line-height:23px;color:#8c8c8c;left:551.7px;">PLC_1</div>
<svg class="i" style="left:677.5px;top:110.2px;color:#222" width="18.6" height="14"><use href="#code"/></svg>
<div class="t" style="top:104.5px;font-size:17.8px;line-height:23px;color:#1c1c1c;left:709.8px;">PU_1</div>
<svg class="i" style="left:790px;top:110.5px;" width="8.5" height="8.5" viewBox="0 0 8.5 8.5"><path d="M.5 .5L8 8M8 .5L.5 8" stroke="#333" stroke-width="1.3"/></svg>
<div style="left:664px;top:136.8px;width:148px;height:3.2px;background:#1d6ff2;"></div>
<svg class="i" style="left:526px;top:157px;" width="24" height="24" viewBox="0 0 24 24"><path d="M12 0V24M0 12H24" stroke="#a9c8fb" stroke-width="3.4"/></svg>
<svg class="i" style="left:578px;top:157px;" width="21" height="24" viewBox="0 0 21 24"><path d="M10.5 1.5V24M1.2 11.2L10.5 1.8L19.8 11.2" fill="none" stroke="#a9c8fb" stroke-width="3.2"/></svg>
<svg class="i" style="left:629px;top:157px;" width="21" height="24" viewBox="0 0 21 24"><path d="M10.5 0V22.5M1.2 12.8L10.5 22.2L19.8 12.8" fill="none" stroke="#a9c8fb" stroke-width="3.2"/></svg>
<svg class="i" style="left:679px;top:157px;" width="24" height="24" viewBox="0 0 24 24"><path d="M13 1.3H4.2Q1.3 1.3 1.3 4.2V19.8Q1.3 22.7 4.2 22.7H19.8Q22.7 22.7 22.7 19.8V12" fill="none" stroke="#1f6ff4" stroke-width="2.6"/><path d="M23.2 .8Q13.6 2.4 12.4 10.4L8 8.2L10.4 18.4L20 14L15.8 12Q16.4 5.4 23.2 .8Z" fill="#0a4ec2"/></svg>
<svg class="i" style="left:730px;top:157px;" width="24" height="24" viewBox="0 0 24 24"><path d="M11 1.3H4.2Q1.3 1.3 1.3 4.2V19.8Q1.3 22.7 4.2 22.7H19.8Q22.7 22.7 22.7 19.8V14" fill="none" stroke="#1f6ff4" stroke-width="2.6"/><path d="M8.4 16.4Q9 6.6 16.4 4.8L14.6 .6L24.2 3L20.6 12.2L18.6 8.2Q12 9.2 8.4 16.4Z" fill="#0a4ec2"/></svg>
<svg class="i" style="left:781px;top:157px;" width="24" height="24" viewBox="0 0 24 24"><g fill="none" stroke="#dde4ef" stroke-width="1.5"><path d="M20.8 8.5A10 10 0 1 0 12 22"/><path d="M17.8 3.4l3.4 .8-.6 4"/><path d="M11 7v6"/></g><path d="M15 14l8.4 4.6L15 23.2z" fill="#dde4ef"/></svg>
<div style="left:833.5px;top:158px;width:1.6px;height:21px;background:#aab2c2;"></div>
<svg class="i" style="left:863px;top:157px;" width="24" height="24" viewBox="0 0 24 24"><rect x="0" y="0" width="24" height="6" fill="#1f6ff4"/><path d="M2.4 6V23M2.4 14.6H10M0 23H10" fill="none" stroke="#1f6ff4" stroke-width="1.6"/><path d="M12 17.6H24M18 11.6V23.6" stroke="#1f6ff4" stroke-width="3.4"/></svg>
<svg class="i" style="left:914px;top:157px;" width="24" height="24" viewBox="0 0 24 24"><rect x="0" y="0" width="24" height="6" fill="#1f6ff4"/><path d="M2.4 6V23M2.4 14.6H10M0 23H10" fill="none" stroke="#1f6ff4" stroke-width="1.6"/><path d="M11 14.6H16" stroke="#1f6ff4" stroke-width="1.6"/><path d="M14 17.8H24" stroke="#1f6ff4" stroke-width="2.6"/></svg>
<svg class="i" style="left:965px;top:157px;" width="24" height="24" viewBox="0 0 24 24"><rect x="0" y="0" width="24" height="6" fill="#1f6ff4"/><rect x="0" y="8.8" width="24" height="6" fill="#1f6ff4"/><rect x="0" y="17.6" width="24" height="6" fill="#1f6ff4"/></svg>
<svg class="i" style="left:1015.5px;top:157px;" width="25" height="24" viewBox="0 0 25 24"><path d="M12.4 1.2Q23.6 1.2 23.6 10Q23.6 18.6 12.4 18.6Q10.6 18.6 9 18.2L4.6 22.8L6 17Q1.2 14.4 1.2 10Q1.2 1.2 12.4 1.2Z" fill="none" stroke="#1f6ff4" stroke-width="1.6" stroke-linejoin="round"/><circle cx="7.4" cy="10" r="1.3" fill="#1f6ff4"/><circle cx="12.4" cy="10" r="1.3" fill="#1f6ff4"/><circle cx="17.4" cy="10" r="1.3" fill="#1f6ff4"/></svg>
<svg class="i" style="left:1066.5px;top:157px;" width="25" height="24" viewBox="0 0 25 24"><path d="M12.5 1.4Q13.2 1.4 13.6 2.2L16.4 8L22.6 8.8Q24.2 9.2 23 10.6L18.4 15L19.6 21.4Q19.8 23.2 18.2 22.4L12.5 19.4L6.8 22.4Q5.2 23.2 5.4 21.4L6.6 15L2 10.6Q0.8 9.2 2.4 8.8L8.6 8L11.4 2.2Q11.8 1.4 12.5 1.4Z" fill="none" stroke="#1f6ff4" stroke-width="1.7" stroke-linejoin="round"/></svg>
<div style="left:1112px;top:151.2px;width:36px;height:35.6px;background:#c2d9fb;"></div>
<svg class="i" style="left:1118px;top:161px;" width="24" height="16" viewBox="0 0 24 16"><g fill="none" stroke="#1f6ff4" stroke-width="1.6"><circle cx="5.2" cy="10.2" r="4.6"/><circle cx="18.8" cy="10.2" r="4.6"/><path d="M9.8 9.6Q12 8.2 14.2 9.6M1 8.4L3.2 3H8.4L9.6 6.6H14.4L15.6 3H20.8L23 8.4"/></g><path d="M3.6 1h4.4v2.4H3.6zM16 1h4.4v2.4H16z" fill="#1f6ff4"/></svg>
<svg class="i" style="left:1168.5px;top:157px;" width="25" height="24" viewBox="0 0 25 24"><g fill="none" stroke="#c2d5f8" stroke-width="1.4" stroke-linejoin="round"><path d="M10 1h5v9.4h4.4L12.5 17.6 5.6 10.4H10z"/><path d="M5 13.4H1V23H24V13.4H20"/><path d="M5 17v3.4M8 17v3.4"/><circle cx="19.6" cy="18.6" r="1.6"/><path d="M11.4 19.6q1.4 1.2 3 0"/></g></svg>
<svg class="i" style="left:1220px;top:157px;" width="25" height="25" viewBox="0 0 25 25"><circle cx="10" cy="10" r="8.4" fill="#f2bf22" stroke="#1664e4" stroke-width="2.6"/><path d="M16.4 16.4L22.6 22.6" stroke="#0b4fc4" stroke-width="3.4" stroke-linecap="round"/><path d="M5 9Q5.6 5.6 9 5" fill="none" stroke="#fff" stroke-width="1.8" stroke-linecap="round"/></svg>
<div style="left:507px;top:197px;width:1676.5px;height:455px;background:#ffffff;"></div>
<div style="left:507px;top:265px;width:1669px;height:36px;background:#f6f9fe;"></div>
<div style="left:507px;top:337px;width:1669px;height:36px;background:#f6f9fe;"></div>
<div style="left:507px;top:409px;width:1669px;height:36px;background:#f6f9fe;"></div>
<div style="left:507px;top:481px;width:1669px;height:36px;background:#fdfdfe;"></div>
<div style="left:507px;top:553px;width:1669px;height:36px;background:#fdfdfe;"></div>
<div style="left:507px;top:625px;width:1669px;height:36px;background:#fdfdfe;"></div>
<div style="left:507px;top:197px;width:1676.5px;height:36px;background:#f3f6fe;"></div>
<div style="left:565px;top:197px;width:1px;height:455px;background:#e2ebfb;"></div>
<div style="left:955px;top:197px;width:1px;height:455px;background:#e2ebfb;"></div>
<div style="left:1225px;top:197px;width:1px;height:455px;background:#e2ebfb;"></div>
<div style="left:1480px;top:197px;width:1px;height:455px;background:#e2ebfb;"></div>
<div style="left:1540px;top:197px;width:1px;height:455px;background:#e2ebfb;"></div>
<div style="left:1815px;top:197px;width:1px;height:455px;background:#e2ebfb;"></div>
<div style="left:2089px;top:197px;width:1px;height:455px;background:#e2ebfb;"></div>
<svg class="i" style="left:534.5px;top:201px;" width="27" height="26" viewBox="0 0 27 26"><path d="M26.5 0V26H0Z" fill="#c6d8f8"/></svg>
<div class="t" style="top:205.6px;font-size:17px;line-height:22px;color:#2a2a2a;left:614px;">名称</div>
<div class="t" style="top:205.6px;font-size:17px;line-height:22px;color:#2a2a2a;left:972.3px;">数据类型</div>
<div class="t" style="top:205.6px;font-size:17px;line-height:22px;color:#2a2a2a;left:1242.3px;">初始值</div>
<div class="t" style="top:205.6px;font-size:17px;line-height:22px;color:#2a2a2a;left:1496.8px;">保持</div>
<div class="t" style="top:205.6px;font-size:17px;line-height:22px;color:#2a2a2a;left:1557.3px;">显示格式</div>
<div class="t" style="top:205.6px;font-size:17px;line-height:22px;color:#2a2a2a;left:1832px;">实际值</div>
<div class="t" style="top:205.6px;font-size:17px;line-height:22px;color:#2a2a2a;left:2106.3px;">修改值</div>
<div class="t" style="top:236.3px;font-size:18px;line-height:23px;color:#3a3a3a;right:2331.5px;">39</div>
<div style="left:610.8px;top:243.8px;width:6.6px;height:6.6px;background:#8cb6f9;border-radius:50%;"></div>
<div class="t" style="top:234.8px;font-size:19.5px;line-height:25px;color:#8e8e8e;left:637.5px;">HH</div>
<div class="t" style="top:234.8px;font-size:19.5px;line-height:25px;color:#8e8e8e;left:972px;">BYTE</div>
<div class="t" style="top:234.8px;font-size:19.5px;line-height:25px;color:#cdcdcd;left:1242.5px;">16#00</div>
<div style="left:1501.2px;top:238px;width:17.8px;height:17.8px;background:#e8e8e8;border:1.3px solid #d3d3d3;border-radius:3.5px;"></div>
<div class="t" style="top:232.5px;font-size:18px;line-height:23px;color:#222;left:1561.5px;">十六进制</div>
<svg class="i" style="left:1769px;top:237px;" width="15" height="9" viewBox="0 0 15 9"><path d="M1 1L7.5 7.5L14 1" fill="none" stroke="#1a1a1a" stroke-width="1.9"/></svg>
<div class="t" style="top:236.7px;font-size:18px;line-height:23px;color:#333;left:1832px;">16#00</div>
<div class="t" style="top:234.8px;font-size:19.5px;line-height:25px;color:#d2d2d2;left:2106.5px;">16#</div>
<div class="t" style="top:272.3px;font-size:18px;line-height:23px;color:#3a3a3a;right:2331.5px;">40</div>
<div style="left:610.8px;top:279.8px;width:6.6px;height:6.6px;background:#8cb6f9;border-radius:50%;"></div>
<div class="t" style="top:270.8px;font-size:19.5px;line-height:25px;color:#8e8e8e;left:637.5px;">HL</div>
<div class="t" style="top:270.8px;font-size:19.5px;line-height:25px;color:#8e8e8e;left:972px;">BYTE</div>
<div class="t" style="top:270.8px;font-size:19.5px;line-height:25px;color:#cdcdcd;left:1242.5px;">16#00</div>
<div style="left:1501.2px;top:274px;width:17.8px;height:17.8px;background:#e8e8e8;border:1.3px solid #d3d3d3;border-radius:3.5px;"></div>
<div class="t" style="top:268.5px;font-size:18px;line-height:23px;color:#222;left:1561.5px;">十六进制</div>
<svg class="i" style="left:1769px;top:273px;" width="15" height="9" viewBox="0 0 15 9"><path d="M1 1L7.5 7.5L14 1" fill="none" stroke="#1a1a1a" stroke-width="1.9"/></svg>
<div class="t" style="top:272.7px;font-size:18px;line-height:23px;color:#333;left:1832px;">16#00</div>
<div class="t" style="top:270.8px;font-size:19.5px;line-height:25px;color:#d2d2d2;left:2106.5px;">16#</div>
<div class="t" style="top:308.3px;font-size:18px;line-height:23px;color:#3a3a3a;right:2331.5px;">41</div>
<div style="left:610.8px;top:315.8px;width:6.6px;height:6.6px;background:#8cb6f9;border-radius:50%;"></div>
<div class="t" style="top:306.8px;font-size:19.5px;line-height:25px;color:#8e8e8e;left:637.5px;">LH</div>
<div class="t" style="top:306.8px;font-size:19.5px;line-height:25px;color:#8e8e8e;left:972px;">BYTE</div>
<div class="t" style="top:306.8px;font-size:19.5px;line-height:25px;color:#cdcdcd;left:1242.5px;">16#00</div>
<div style="left:1501.2px;top:310px;width:17.8px;height:17.8px;background:#e8e8e8;border:1.3px solid #d3d3d3;border-radius:3.5px;"></div>
<div class="t" style="top:304.5px;font-size:18px;line-height:23px;color:#222;left:1561.5px;">十六进制</div>
<svg class="i" style="left:1769px;top:309px;" width="15" height="9" viewBox="0 0 15 9"><path d="M1 1L7.5 7.5L14 1" fill="none" stroke="#1a1a1a" stroke-width="1.9"/></svg>
<div class="t" style="top:308.7px;font-size:18px;line-height:23px;color:#333;left:1832px;">16#00</div>
<div class="t" style="top:306.8px;font-size:19.5px;line-height:25px;color:#d2d2d2;left:2106.5px;">16#</div>
<div class="t" style="top:344.3px;font-size:18px;line-height:23px;color:#3a3a3a;right:2331.5px;">42</div>
<div style="left:610.8px;top:351.8px;width:6.6px;height:6.6px;background:#8cb6f9;border-radius:50%;"></div>
<div class="t" style="top:342.8px;font-size:19.5px;line-height:25px;color:#8e8e8e;left:637.5px;">LL</div>
<div class="t" style="top:342.8px;font-size:19.5px;line-height:25px;color:#8e8e8e;left:972px;">BYTE</div>
<div class="t" style="top:342.8px;font-size:19.5px;line-height:25px;color:#cdcdcd;left:1242.5px;">16#00</div>
<div style="left:1501.2px;top:346px;width:17.8px;height:17.8px;background:#e8e8e8;border:1.3px solid #d3d3d3;border-radius:3.5px;"></div>
<div class="t" style="top:340.5px;font-size:18px;line-height:23px;color:#222;left:1561.5px;">十六进制</div>
<svg class="i" style="left:1769px;top:345px;" width="15" height="9" viewBox="0 0 15 9"><path d="M1 1L7.5 7.5L14 1" fill="none" stroke="#1a1a1a" stroke-width="1.9"/></svg>
<div class="t" style="top:344.7px;font-size:18px;line-height:23px;color:#333;left:1832px;">16#00</div>
<div class="t" style="top:342.8px;font-size:19.5px;line-height:25px;color:#d2d2d2;left:2106.5px;">16#</div>
<div class="t" style="top:380.3px;font-size:18px;line-height:23px;color:#3a3a3a;right:2331.5px;">43</div>
<div style="left:610.8px;top:387.8px;width:6.6px;height:6.6px;background:#8cb6f9;border-radius:50%;"></div>
<div class="t" style="top:378.8px;font-size:19.5px;line-height:25px;color:#8e8e8e;left:637.5px;">HIGH</div>
<div class="t" style="top:378.8px;font-size:19.5px;line-height:25px;color:#8e8e8e;left:972px;">WORD</div>
<div class="t" style="top:378.8px;font-size:19.5px;line-height:25px;color:#cdcdcd;left:1242.5px;">16#0000</div>
<div style="left:1501.2px;top:382px;width:17.8px;height:17.8px;background:#e8e8e8;border:1.3px solid #d3d3d3;border-radius:3.5px;"></div>
<div class="t" style="top:376.5px;font-size:18px;line-height:23px;color:#222;left:1561.5px;">十六进制</div>
<svg class="i" style="left:1769px;top:381px;" width="15" height="9" viewBox="0 0 15 9"><path d="M1 1L7.5 7.5L14 1" fill="none" stroke="#1a1a1a" stroke-width="1.9"/></svg>
<div class="t" style="top:380.7px;font-size:18px;line-height:23px;color:#333;left:1832px;">16#0000</div>
<div class="t" style="top:378.8px;font-size:19.5px;line-height:25px;color:#d2d2d2;left:2106.5px;">16#</div>
<div class="t" style="top:416.3px;font-size:18px;line-height:23px;color:#3a3a3a;right:2331.5px;">44</div>
<div style="left:610.8px;top:423.8px;width:6.6px;height:6.6px;background:#8cb6f9;border-radius:50%;"></div>
<div class="t" style="top:414.8px;font-size:19.5px;line-height:25px;color:#8e8e8e;left:637.5px;">LOW</div>
<div class="t" style="top:414.8px;font-size:19.5px;line-height:25px;color:#8e8e8e;left:972px;">WORD</div>
<div class="t" style="top:414.8px;font-size:19.5px;line-height:25px;color:#cdcdcd;left:1242.5px;">16#0000</div>
<div style="left:1501.2px;top:418px;width:17.8px;height:17.8px;background:#e8e8e8;border:1.3px solid #d3d3d3;border-radius:3.5px;"></div>
<div class="t" style="top:412.5px;font-size:18px;line-height:23px;color:#222;left:1561.5px;">十六进制</div>
<svg class="i" style="left:1769px;top:417px;" width="15" height="9" viewBox="0 0 15 9"><path d="M1 1L7.5 7.5L14 1" fill="none" stroke="#1a1a1a" stroke-width="1.9"/></svg>
<div class="t" style="top:416.7px;font-size:18px;line-height:23px;color:#333;left:1832px;">16#0000</div>
<div class="t" style="top:414.8px;font-size:19.5px;line-height:25px;color:#d2d2d2;left:2106.5px;">16#</div>
<div class="t" style="top:452.3px;font-size:18px;line-height:23px;color:#3a3a3a;right:2331.5px;">45</div>
<div style="left:610.8px;top:459.8px;width:6.6px;height:6.6px;background:#8cb6f9;border-radius:50%;"></div>
<div class="t" style="top:450.8px;font-size:19.5px;line-height:25px;color:#8e8e8e;left:637.5px;">in</div>
<div class="t" style="top:450.8px;font-size:19.5px;line-height:25px;color:#8e8e8e;left:972px;">WORD</div>
<div class="t" style="top:450.8px;font-size:19.5px;line-height:25px;color:#cdcdcd;left:1242.5px;">16#0000</div>
<div style="left:1501.2px;top:454px;width:17.8px;height:17.8px;background:#e8e8e8;border:1.3px solid #d3d3d3;border-radius:3.5px;"></div>
<div class="t" style="top:448.5px;font-size:18px;line-height:23px;color:#222;left:1561.5px;">十六进制</div>
<svg class="i" style="left:1769px;top:453px;" width="15" height="9" viewBox="0 0 15 9"><path d="M1 1L7.5 7.5L14 1" fill="none" stroke="#1a1a1a" stroke-width="1.9"/></svg>
<div class="t" style="top:452.7px;font-size:18px;line-height:23px;color:#333;left:1832px;">16#0000</div>
<div class="t" style="top:450.8px;font-size:19.5px;line-height:25px;color:#d2d2d2;left:2106.5px;">16#</div>
<div class="t" style="top:488.0px;font-size:18px;line-height:23px;color:#8c8c8c;right:2331.5px;">46</div>
<div style="left:611px;top:495.6px;width:6.4px;height:6.4px;background:#c9dcfb;border-radius:50%;"></div>
<div class="t" style="top:486.5px;font-size:19.5px;line-height:25px;color:#c4c4c4;left:637.5px;">添加</div>
<svg class="i" style="left:582.5px;top:530.5px;" width="12" height="8" viewBox="0 0 12 8"><path d="M1 1L6 6.2L11 1" fill="none" stroke="#2a7bf4" stroke-width="1.9"/></svg>
<div class="t" style="top:523.8px;font-size:18px;line-height:23px;color:#2a7bf4;left:610px;">TEMP</div>
<div class="t" style="top:560.0px;font-size:18px;line-height:23px;color:#8c8c8c;right:2331.5px;">1</div>
<div style="left:611px;top:567.6px;width:6.4px;height:6.4px;background:#c9dcfb;border-radius:50%;"></div>
<div class="t" style="top:558.5px;font-size:19.5px;line-height:25px;color:#c4c4c4;left:637.5px;">添加</div>
<svg class="i" style="left:582.5px;top:602.5px;" width="12" height="8" viewBox="0 0 12 8"><path d="M1 1L6 6.2L11 1" fill="none" stroke="#2a7bf4" stroke-width="1.9"/></svg>
<div class="t" style="top:595.8px;font-size:18px;line-height:23px;color:#2a7bf4;left:610px;">LOCAL CONSTANT</div>
<div class="t" style="top:632.0px;font-size:18px;line-height:23px;color:#8c8c8c;right:2331.5px;">1</div>
<div style="left:611px;top:639.6px;width:6.4px;height:6.4px;background:#c9dcfb;border-radius:50%;"></div>
<div class="t" style="top:630.5px;font-size:19.5px;line-height:25px;color:#c4c4c4;left:637.5px;">添加</div>
<div style="left:507px;top:652px;width:1676.5px;height:9.5px;background:#fdfdfd;"></div>
<div style="left:507px;top:652px;width:1132px;height:9.5px;background:#c9c9c9;"></div>
<div style="left:2175.5px;top:552.5px;width:8.5px;height:96px;background:#c6c6c6;border-radius:2px;"></div>
<div style="left:2175px;top:197px;width:0.8px;height:455px;background:#eef2fa;"></div>
<div style="left:507px;top:661px;width:1676.5px;height:6px;background:#a4c4f9;"></div>
<div style="left:507px;top:667px;width:1676.5px;height:748px;background:#ffffff;"></div>
<div style="left:507px;top:667px;width:34.5px;height:727px;background:#e6e6e6;"></div>
<div style="left:540.3px;top:667px;width:1.6px;height:727px;background:#e9f0fd;"></div>
<div style="left:541.5px;top:667px;width:1622.5px;height:36px;background:#f7f7f7;"></div>
<div style="left:579px;top:670.5px;width:270px;height:28.5px;background:#fafafa;border-radius:4px;"></div>
<svg class="i" style="left:550.5px;top:680.5px;" width="13" height="9" viewBox="0 0 13 9"><path d="M1.2 1.2L6.5 6.8L11.8 1.2" fill="none" stroke="#333" stroke-width="1.8"/></svg>
<div class="t" style="top:673.0px;font-size:18px;line-height:23px;color:#1d6ff2;font-weight:bold;left:583px;">程序段&nbsp; 1</div>
<div class="t" style="top:1184.5px;font-size:18px;line-height:23px;color:#111;font-family:'Liberation Mono',monospace;-webkit-text-stroke:.35px currentColor;font-weight:bold;left:523px;transform:translateX(-50%);">1</div>
<div style="left:555.5px;top:717px;width:835.5px;height:677px;border:2px solid #e8effd;border-bottom:none;background:#fff"></div>
<div style="left:570.2px;top:731.5px;width:2px;height:662.5px;background:#38d39c;"></div>
<div style="left:570.2px;top:808px;width:276.5px;height:2px;background:#38d39c;"></div>
<div style="left:1100px;top:808px;width:275px;height:2px;background:#38d39c;"></div>
<div style="left:1373.2px;top:800.5px;width:2px;height:18px;background:#38d39c;"></div>
<div style="left:846.4px;top:767px;width:253.6px;height:627px;background:#f3f6fe;"></div>
<div style="left:846.4px;top:767px;width:253.6px;height:24px;background:#dbe7fc;"></div>
<div style="left:846px;top:767px;width:1.6px;height:627px;background:#38d39c;"></div>
<div style="left:1098.6px;top:767px;width:1.6px;height:627px;background:#38d39c;"></div>
<div style="left:846px;top:766.6px;width:254.2px;height:1.4px;background:#38d39c;"></div>
<div style="left:920.5px;top:808.4px;width:104.5px;height:1.2px;background:#38d39c;"></div>
<div class="t" style="top:733.3px;font-size:17.4px;line-height:23px;color:#151515;font-family:'Liberation Mono',monospace;-webkit-text-stroke:.35px currentColor;left:973px;transform:translateX(-50%);">UNPACK_WORD_1</div>
<div class="t" style="top:768.5px;font-size:17.4px;line-height:23px;color:#151515;font-family:'Liberation Mono',monospace;-webkit-text-stroke:.35px currentColor;left:973px;transform:translateX(-50%);">UNPACK_WORD</div>
<div class="t" style="top:797.0px;font-size:17.4px;line-height:23px;color:#151515;font-family:'Liberation Mono',monospace;-webkit-text-stroke:.35px currentColor;left:852px;">EN</div>
<div class="t" style="top:797.0px;font-size:17.4px;line-height:23px;color:#151515;font-family:'Liberation Mono',monospace;-webkit-text-stroke:.35px currentColor;right:1800.5px;">ENO</div>
<div style="left:705.5px;top:822px;width:98px;height:23.5px;background:#e8f0fe;"></div>
<div class="t" style="top:822.5px;font-size:17.4px;line-height:23px;color:#151515;font-family:'Liberation Mono',monospace;-webkit-text-stroke:.35px currentColor;left:754.5px;transform:translateX(-50%);">16#0000</div>
<div class="t" style="top:846.0px;font-size:17.4px;line-height:23px;color:#151515;font-family:'Liberation Mono',monospace;-webkit-text-stroke:.35px currentColor;right:2091.5px;">in</div>
<div style="left:808px;top:854px;width:38.5px;height:2px;background:#8fb6f9;"></div>
<div class="t" style="top:847.0px;font-size:17.4px;line-height:23px;color:#151515;font-family:'Liberation Mono',monospace;-webkit-text-stroke:.35px currentColor;left:852px;">IN_W</div>
<div class="t" style="top:847.0px;font-size:17.4px;line-height:23px;color:#151515;font-family:'Liberation Mono',monospace;-webkit-text-stroke:.35px currentColor;right:1800.5px;">High_Byte</div>
<div style="left:1100px;top:854.0px;width:38px;height:2px;background:#8fb6f9;"></div>
<div class="t" style="top:845.5px;font-size:17.4px;line-height:23px;color:#151515;font-family:'Liberation Mono',monospace;-webkit-text-stroke:.35px currentColor;left:1143px;">HH</div>
<div style="left:1143px;top:822.0px;width:84px;height:23.5px;background:#e8f0fe;"></div>
<div class="t" style="top:822.5px;font-size:17.4px;line-height:23px;color:#151515;font-family:'Liberation Mono',monospace;-webkit-text-stroke:.35px currentColor;left:1181px;transform:translateX(-50%);">16#00</div>
<div class="t" style="top:895.0px;font-size:17.4px;line-height:23px;color:#151515;font-family:'Liberation Mono',monospace;-webkit-text-stroke:.35px currentColor;right:1800.5px;">Low_Byte</div>
<div style="left:1100px;top:902.0px;width:38px;height:2px;background:#8fb6f9;"></div>
<div class="t" style="top:893.5px;font-size:17.4px;line-height:23px;color:#151515;font-family:'Liberation Mono',monospace;-webkit-text-stroke:.35px currentColor;left:1143px;">LL</div>
<div style="left:1143px;top:870.0px;width:84px;height:23.5px;background:#e8f0fe;"></div>
<div class="t" style="top:870.5px;font-size:17.4px;line-height:23px;color:#151515;font-family:'Liberation Mono',monospace;-webkit-text-stroke:.35px currentColor;left:1181px;transform:translateX(-50%);">16#00</div>
<div class="t" style="top:943.0px;font-size:17.4px;line-height:23px;color:#151515;font-family:'Liberation Mono',monospace;-webkit-text-stroke:.35px currentColor;right:1800.5px;">BIT0</div>
<div style="left:1100px;top:950.0px;width:38px;height:2px;background:#8fb6f9;"></div>
<div class="t" style="top:941.5px;font-size:17.4px;line-height:23px;color:#151515;font-family:'Liberation Mono',monospace;-webkit-text-stroke:.35px currentColor;left:1143px;">bit0</div>
<div style="left:1143px;top:918.0px;width:84px;height:23.5px;background:#e8f0fe;"></div>
<div class="t" style="top:918.5px;font-size:17.4px;line-height:23px;color:#151515;font-family:'Liberation Mono',monospace;-webkit-text-stroke:.35px currentColor;left:1181px;transform:translateX(-50%);">FALSE</div>
<div class="t" style="top:991.0px;font-size:17.4px;line-height:23px;color:#151515;font-family:'Liberation Mono',monospace;-webkit-text-stroke:.35px currentColor;right:1800.5px;">BIT1</div>
<div style="left:1100px;top:998.0px;width:38px;height:2px;background:#8fb6f9;"></div>
<div class="t" style="top:989.5px;font-size:17.4px;line-height:23px;color:#151515;font-family:'Liberation Mono',monospace;-webkit-text-stroke:.35px currentColor;left:1143px;">bit0_1</div>
<div style="left:1143px;top:966.0px;width:84px;height:23.5px;background:#e8f0fe;"></div>
<div class="t" style="top:966.5px;font-size:17.4px;line-height:23px;color:#151515;font-family:'Liberation Mono',monospace;-webkit-text-stroke:.35px currentColor;left:1181px;transform:translateX(-50%);">FALSE</div>
<div class="t" style="top:1039.0px;font-size:17.4px;line-height:23px;color:#151515;font-family:'Liberation Mono',monospace;-webkit-text-stroke:.35px currentColor;right:1800.5px;">BIT2</div>
<div style="left:1100px;top:1046.0px;width:38px;height:2px;background:#8fb6f9;"></div>
<div class="t" style="top:1037.5px;font-size:17.4px;line-height:23px;color:#151515;font-family:'Liberation Mono',monospace;-webkit-text-stroke:.35px currentColor;left:1143px;">bit0_2</div>
<div style="left:1143px;top:1014.0px;width:84px;height:23.5px;background:#e8f0fe;"></div>
<div class="t" style="top:1014.5px;font-size:17.4px;line-height:23px;color:#151515;font-family:'Liberation Mono',monospace;-webkit-text-stroke:.35px currentColor;left:1181px;transform:translateX(-50%);">FALSE</div>
<div class="t" style="top:1087.0px;font-size:17.4px;line-height:23px;color:#151515;font-family:'Liberation Mono',monospace;-webkit-text-stroke:.35px currentColor;right:1800.5px;">BIT3</div>
<div style="left:1100px;top:1094.0px;width:38px;height:2px;background:#8fb6f9;"></div>
<div class="t" style="top:1085.5px;font-size:17.4px;line-height:23px;color:#151515;font-family:'Liberation Mono',monospace;-webkit-text-stroke:.35px currentColor;left:1143px;">bit0_3</div>
<div style="left:1143px;top:1062.0px;width:84px;height:23.5px;background:#e8f0fe;"></div>
<div class="t" style="top:1062.5px;font-size:17.4px;line-height:23px;color:#151515;font-family:'Liberation Mono',monospace;-webkit-text-stroke:.35px currentColor;left:1181px;transform:translateX(-50%);">FALSE</div>
<div class="t" style="top:1135.0px;font-size:17.4px;line-height:23px;color:#151515;font-family:'Liberation Mono',monospace;-webkit-text-stroke:.35px currentColor;right:1800.5px;">BIT4</div>
<div style="left:1100px;top:1142.0px;width:38px;height:2px;background:#8fb6f9;"></div>
<div class="t" style="top:1133.5px;font-size:17.4px;line-height:23px;color:#151515;font-family:'Liberation Mono',monospace;-webkit-text-stroke:.35px currentColor;left:1143px;">bit0_4</div>
<div style="left:1143px;top:1110.0px;width:84px;height:23.5px;background:#e8f0fe;"></div>
<div class="t" style="top:1110.5px;font-size:17.4px;line-height:23px;color:#151515;font-family:'Liberation Mono',monospace;-webkit-text-stroke:.35px currentColor;left:1181px;transform:translateX(-50%);">FALSE</div>
<div class="t" style="top:1183.0px;font-size:17.4px;line-height:23px;color:#151515;font-family:'Liberation Mono',monospace;-webkit-text-stroke:.35px currentColor;right:1800.5px;">BIT5</div>
<div style="left:1100px;top:1190.0px;width:38px;height:2px;background:#8fb6f9;"></div>
<div class="t" style="top:1181.5px;font-size:17.4px;line-height:23px;color:#151515;font-family:'Liberation Mono',monospace;-webkit-text-stroke:.35px currentColor;left:1143px;">bit0_5</div>
<div style="left:1143px;top:1158.0px;width:84px;height:23.5px;background:#e8f0fe;"></div>
<div class="t" style="top:1158.5px;font-size:17.4px;line-height:23px;color:#151515;font-family:'Liberation Mono',monospace;-webkit-text-stroke:.35px currentColor;left:1181px;transform:translateX(-50%);">FALSE</div>
<div class="t" style="top:1231.0px;font-size:17.4px;line-height:23px;color:#151515;font-family:'Liberation Mono',monospace;-webkit-text-stroke:.35px currentColor;right:1800.5px;">BIT6</div>
<div style="left:1100px;top:1238.0px;width:38px;height:2px;background:#8fb6f9;"></div>
<div class="t" style="top:1229.5px;font-size:17.4px;line-height:23px;color:#151515;font-family:'Liberation Mono',monospace;-webkit-text-stroke:.35px currentColor;left:1143px;">bit0_6</div>
<div style="left:1143px;top:1206.0px;width:84px;height:23.5px;background:#e8f0fe;"></div>
<div class="t" style="top:1206.5px;font-size:17.4px;line-height:23px;color:#151515;font-family:'Liberation Mono',monospace;-webkit-text-stroke:.35px currentColor;left:1181px;transform:translateX(-50%);">FALSE</div>
<div class="t" style="top:1279.0px;font-size:17.4px;line-height:23px;color:#151515;font-family:'Liberation Mono',monospace;-webkit-text-stroke:.35px currentColor;right:1800.5px;">BIT7</div>
<div style="left:1100px;top:1286.0px;width:38px;height:2px;background:#8fb6f9;"></div>
<div class="t" style="top:1277.5px;font-size:17.4px;line-height:23px;color:#151515;font-family:'Liberation Mono',monospace;-webkit-text-stroke:.35px currentColor;left:1143px;">bit0_7</div>
<div style="left:1143px;top:1254.0px;width:84px;height:23.5px;background:#e8f0fe;"></div>
<div class="t" style="top:1254.5px;font-size:17.4px;line-height:23px;color:#151515;font-family:'Liberation Mono',monospace;-webkit-text-stroke:.35px currentColor;left:1181px;transform:translateX(-50%);">FALSE</div>
<div class="t" style="top:1327.0px;font-size:17.4px;line-height:23px;color:#151515;font-family:'Liberation Mono',monospace;-webkit-text-stroke:.35px currentColor;right:1800.5px;">BIT8</div>
<div style="left:1100px;top:1334.0px;width:38px;height:2px;background:#8fb6f9;"></div>
<div class="t" style="top:1325.5px;font-size:17.4px;line-height:23px;color:#151515;font-family:'Liberation Mono',monospace;-webkit-text-stroke:.35px currentColor;left:1143px;">bit0_8</div>
<div style="left:1143px;top:1302.0px;width:84px;height:23.5px;background:#e8f0fe;"></div>
<div class="t" style="top:1302.5px;font-size:17.4px;line-height:23px;color:#151515;font-family:'Liberation Mono',monospace;-webkit-text-stroke:.35px currentColor;left:1181px;transform:translateX(-50%);">FALSE</div>
<div class="t" style="top:1375.0px;font-size:17.4px;line-height:23px;color:#151515;font-family:'Liberation Mono',monospace;-webkit-text-stroke:.35px currentColor;right:1800.5px;">BIT9</div>
<div style="left:1100px;top:1382.0px;width:38px;height:2px;background:#8fb6f9;"></div>
<div class="t" style="top:1373.5px;font-size:17.4px;line-height:23px;color:#151515;font-family:'Liberation Mono',monospace;-webkit-text-stroke:.35px currentColor;left:1143px;">bit0_9</div>
<div style="left:1143px;top:1350.0px;width:84px;height:23.5px;background:#e8f0fe;"></div>
<div class="t" style="top:1350.5px;font-size:17.4px;line-height:23px;color:#151515;font-family:'Liberation Mono',monospace;-webkit-text-stroke:.35px currentColor;left:1181px;transform:translateX(-50%);">FALSE</div>
<div style="left:507px;top:1394px;width:1676.5px;height:21px;background:#ffffff;"></div>
<div style="left:2164px;top:667px;width:1.2px;height:748px;background:#dcdcdc;"></div>
<div style="left:507px;top:1415px;width:1676.5px;height:41px;background:#fafafa;"></div>
<svg class="i" style="left:523px;top:1430.5px;" width="16" height="10" viewBox="0 0 16 10"><path d="M8 .4L15.4 9.4H.6Z" fill="#2a7bf4" stroke="#2a7bf4" stroke-width="1" stroke-linejoin="round"/></svg>
<div class="t" style="top:1425.0px;font-size:18px;line-height:23px;color:#1c1c1c;left:563.5px;">CYCLE_1</div>
<svg class="i" style="left:666px;top:1429px;" width="9" height="15" viewBox="0 0 9 15"><path d="M1.2 1.2L7.6 7.5L1.2 13.8" fill="none" stroke="#c6c6c6" stroke-width="1.7"/></svg>
<div class="t" style="top:1425.0px;font-size:18px;line-height:23px;color:#2a7bf4;left:697.5px;">PU_1</div>
<svg class="i" style="left:2033px;top:1424px;" width="24" height="24" viewBox="0 0 24 24"><g fill="#1f6ff4"><path d="M.5 6.1H12.6V0L22.4 9H.5z"/><path d="M23.2 17.9H11V24L1.2 15.1H23.2z"/></g></svg>
<div style="left:2072px;top:1424px;width:1.2px;height:24px;background:#cbcbcb;"></div>
<div style="left:2088px;top:1421px;width:61px;height:30px;background:#34dca8;"></div>
<div style="left:2088px;top:1421px;width:35px;height:30px;background:#6fe0b9;"></div>
<div style="left:2088px;top:1421px;width:20px;height:30px;background:#86e6c4;"></div>
<div style="left:2088px;top:1421px;width:4px;height:30px;background:#b5f0ee;"></div>
<div style="left:507px;top:1456px;width:1676.5px;height:4px;background:#bfd5fb;"></div>
<div style="left:507px;top:1456.8px;width:1676.5px;height:2.4px;background:#9dbff9;"></div>
<div style="left:507px;top:1460px;width:1676.5px;height:39px;background:#dde8fc;"></div>
<div style="left:507px;top:1499px;width:1676.5px;height:252px;background:#f7fafe;"></div>
<div style="left:507px;top:1457px;width:99px;height:42px;background:#f8fbff;"></div>
<div style="left:507px;top:1456.5px;width:99px;height:3.5px;background:#1d6ff2;"></div>
<svg class="i" style="left:517px;top:1466px;" width="24" height="24" viewBox="0 0 24 24"><circle cx="12" cy="12" r="10.6" fill="none" stroke="#2a7bf4" stroke-width="2.2"/><text x="12" y="18.6" text-anchor="middle" font-family="Liberation Serif" font-style="italic" font-weight="bold" font-size="19" fill="#2a7bf4">i</text></svg>
<div class="t" style="top:1466.0px;font-size:18px;line-height:23px;color:#2a7bf4;left:551.5px;">信息</div>
<svg class="i" style="left:617.5px;top:1467px;" width="24" height="22" viewBox="0 0 24 22"><g fill="none" stroke="#6f6f6f" stroke-width="2"><rect x="1" y="1" width="22" height="20" rx="2.6"/><path d="M1 6.4H23" stroke-width="1.6"/><rect x="5" y="10.6" width="6" height="5.6" stroke-width="1.8"/><path d="M14 11H19.6M14 15.8H19.6" stroke-width="1.8"/></g></svg>
<div class="t" style="top:1466.0px;font-size:18px;line-height:23px;color:#8a8a8a;left:651.5px;">属性</div>
<div class="t" style="top:1524.1px;font-size:18px;line-height:23px;color:#9a9a9a;left:610.5px;transform:translateX(-50%);">常规</div>
<div class="t" style="top:1524.1px;font-size:18px;line-height:23px;color:#2a7bf4;left:760.5px;transform:translateX(-50%);">下载</div>
<div class="t" style="top:1524.1px;font-size:18px;line-height:23px;color:#9a9a9a;left:910px;transform:translateX(-50%);">编译</div>
<div style="left:538px;top:1554.8px;width:1614px;height:1.2px;background:#7fb0f6;"></div>
<div style="left:688px;top:1552.4px;width:150px;height:3px;background:#1d6ff2;"></div>
<div style="left:538px;top:1592px;width:1605.5px;height:144px;background:#ffffff;"></div>
<div style="left:538px;top:1628px;width:1605.5px;height:36px;background:#fafafa;"></div>
<div style="left:538px;top:1700px;width:1605.5px;height:36px;background:#fafafa;"></div>
<div style="left:2143.5px;top:1592px;width:8.5px;height:145px;background:#f9fbfe;"></div>
<div style="left:538px;top:1556px;width:1614px;height:36px;background:#f4f4f4;box-shadow:0 5px 7px -3px rgba(0,0,0,.22)"></div>
<div style="left:680.8px;top:1565px;width:1.3px;height:18px;background:#c9c9c9;"></div>
<div class="t" style="top:1564.0px;font-size:18px;line-height:23px;color:#111;left:694px;">路径</div>
<div style="left:1750.6px;top:1565px;width:1.3px;height:18px;background:#c9c9c9;"></div>
<div class="t" style="top:1564.0px;font-size:18px;line-height:23px;color:#111;left:1764px;">时间</div>
<div style="left:2143.5px;top:1592px;width:8.5px;height:23px;background:#c9c9c9;border-radius:4px;"></div>
<svg class="i" style="left:593.4px;top:1601px;" width="18" height="18" viewBox="0 0 18 18"><circle cx="9" cy="9" r="9" fill="#0b57d0"/><circle cx="9" cy="4.8" r="1.5" fill="#fff"/><rect x="7.7" y="7.4" width="2.6" height="6.8" fill="#fff"/></svg>
<svg class="i" style="left:698px;top:1606.4px;" width="11" height="7.5" viewBox="0 0 11 7.5"><path d="M1 1L5.5 5.8L10 1" fill="none" stroke="#2a7bf4" stroke-width="1.9"/></svg>
<div class="t" style="top:1598.8px;font-size:18px;line-height:23px;color:#2a7bf4;left:721.3px;">PLC_1</div>
<svg class="i" style="left:593.4px;top:1637px;" width="18" height="18" viewBox="0 0 18 18"><circle cx="9" cy="9" r="9" fill="#0b57d0"/><circle cx="9" cy="4.8" r="1.5" fill="#fff"/><rect x="7.7" y="7.4" width="2.6" height="6.8" fill="#fff"/></svg>
<svg class="i" style="left:725px;top:1642.4px;" width="11" height="7.5" viewBox="0 0 11 7.5"><path d="M1 1L5.5 5.8L10 1" fill="none" stroke="#2a7bf4" stroke-width="1.9"/></svg>
<div class="t" style="top:1634.8px;font-size:18px;line-height:23px;color:#2a7bf4;left:748.5px;">硬件</div>
<svg class="i" style="left:593.4px;top:1673px;" width="18" height="18" viewBox="0 0 18 18"><circle cx="9" cy="9" r="9" fill="#0b57d0"/><circle cx="9" cy="4.8" r="1.5" fill="#fff"/><rect x="7.7" y="7.4" width="2.6" height="6.8" fill="#fff"/></svg>
<div class="t" style="top:1670.8px;font-size:18px;line-height:23px;color:#2a7bf4;left:775.3px;">本地配置</div>
<svg class="i" style="left:593.4px;top:1709px;" width="18" height="18" viewBox="0 0 18 18"><circle cx="9" cy="9" r="9" fill="#0b57d0"/><circle cx="9" cy="4.8" r="1.5" fill="#fff"/><rect x="7.7" y="7.4" width="2.6" height="6.8" fill="#fff"/></svg>
<div class="t" style="top:1706.8px;font-size:18px;line-height:23px;color:#2a7bf4;left:775.3px;">远程配置</div>
<div style="left:538px;top:1737px;width:1614px;height:14px;background:#f7fafe;"></div>
<div style="left:2183.5px;top:92.2px;width:1.7px;height:1658.8px;background:#a2c3fa;"></div>
<div style="left:2185.2px;top:92.2px;width:1.4px;height:1658.8px;background:#c0d6fb;"></div>
<div style="left:2186.6px;top:92.2px;width:664.4000000000001px;height:1658.8px;background:#f7fafe;"></div>
<div style="left:2186.6px;top:92.2px;width:664.4000000000001px;height:47.8px;background:#d3e3fd;"></div>
<div class="t" style="top:106.0px;font-size:18px;line-height:23px;color:#1b1b1b;left:2199.5px;">资源</div>
<svg class="i" style="left:2809px;top:106.5px;" width="19" height="15.5" viewBox="0 0 19 15.5"><path d="M0 0H8.2V2.4H0zM0 6.2H8.2V8.6H0zM0 12.8H18.8V15.2H0z" fill="#2a7bf4"/><path d="M9.8 .4H19L14.8 6.6Q14.4 7.2 14 6.6z" fill="#2a7bf4"/></svg>
<div style="left:2851px;top:92.2px;width:44px;height:1658.8px;background:#e6effd;"></div>
<div style="left:2851px;top:92.2px;width:44px;height:51.8px;background:#bdd5fb;"></div>
<div style="left:2851px;top:92.2px;width:1.2px;height:51.8px;background:#93b7f0;"></div>
<div style="left:2851px;top:92.2px;width:44px;height:1px;background:#8fb9f7;"></div>
<svg class="i" style="left:2860px;top:100px;" width="36" height="37" viewBox="0 0 36 37"><g fill="none" stroke="#2a7bf4" stroke-width="2.6"><rect x="1.5" y="1.5" width="13" height="11.4" rx="3.4"/><rect x="21.5" y="1.5" width="16" height="15.4" rx="3.6"/><rect x="1.5" y="19.5" width="13" height="15.4" rx="3.4"/><rect x="21.5" y="24" width="16" height="11" rx="3.6"/></g></svg>
<svg class="i" style="left:2860px;top:154px;" width="36" height="37" viewBox="0 0 36 37"><g fill="none" stroke="#8b8b8f" stroke-width="1.9"><path d="M15 10V1H36M24 1V11"/><path d="M27.6 4V11M30 4V11"/><rect x="32" y="4" width="3.6" height="7"/><path d="M25 15H36M25 19H36M25 23H36" stroke-dasharray="1.6 1.2"/><path d="M25 27H36" stroke-width="2.2"/><rect x="1.2" y="15" width="20.6" height="14.4" rx="2.4" fill="#edf2fb" stroke-width="2.2"/><path d="M6 22.4L10.4 26L17.4 19.4" stroke-width="2"/><path d="M11.4 29.4V33M2 34H7.6M15.2 34H21"/></g><rect x="8.8" y="32" width="5.4" height="4.4" fill="#8b8b8f"/></svg>
<div style="left:2201px;top:147.6px;width:499.5px;height:36.6px;background:#fff;border:1.2px solid #e9ecf2;border-radius:5px"></div>
<div class="t" style="top:154.5px;font-size:18px;line-height:23px;color:#9b9b9b;left:2216.5px;">搜索</div>
<svg class="i" style="left:2719px;top:157px;" width="19" height="18.5" viewBox="0 0 19 18.5"><g fill="none" stroke="#2a7bf4" stroke-width="1.8"><path d="M10 14.6A7.3 7.3 0 1 1 14.8 10.4" stroke-linecap="round"/><path d="M7.4 15.2Q9 15.4 10.4 14.8" stroke-linecap="round"/><path d="M13.4 13.4L18.2 18"/></g></svg>
<svg class="i" style="left:2762px;top:155px;" width="23" height="22.5" viewBox="0 0 23 22.5"><g fill="none" stroke="#2a7bf4" stroke-width="1.9" stroke-linejoin="round"><path d="M5.4 1.4L21.4 17.4L17.4 21.4L1.4 5.4Z" fill="#f7fafe"/><path d="M5 6.6L7 4.6M15.6 17.4L17.6 15.4" stroke-width="1.5"/><path d="M17.6 1.4L21.6 5.4L7.4 19.6L1.6 21.6L3.4 15.6Z" fill="#f7fafe"/><path d="M3.6 15.6L7.4 19.4" stroke-width="1.5"/></g></svg>
<div style="left:2800px;top:148px;width:36px;height:36px;background:#d0e1fd;border-radius:6px;"></div>
<svg class="i" style="left:2809px;top:156.5px;" width="19" height="19" viewBox="0 0 19 19"><path d="M1 1.4H18" stroke="#2a7bf4" stroke-width="2.6" stroke-linecap="round"/><path d="M1 9.2H5.6M1 16.8H5.6" stroke="#2a7bf4" stroke-width="2.6" stroke-linecap="round"/><path d="M13 5.8L15 10L19.4 10.6L16.2 13.8L17 18.4L13 16.2L9 18.4L9.8 13.8L6.6 10.6L11 10Z" fill="#2a7bf4" stroke="#2a7bf4" stroke-width=".8" stroke-linejoin="round"/></svg>
<div style="left:2186.6px;top:193px;width:664.4000000000001px;height:33px;background:#e2ecfe;border-radius:0 5px 5px 0;"></div>
<div class="t" style="top:197.5px;font-size:18px;line-height:23px;color:#2a7bf4;font-weight:bold;left:2189.5px;">基础指令</div>
<svg class="i" style="left:2827px;top:204.6px;" width="16" height="9.5" viewBox="0 0 16 9.5"><path d="M1 1L8 8L15 1" fill="none" stroke="#2a7bf4" stroke-width="1.7"/></svg>
<div style="left:2188.2px;top:228.8px;width:660.3px;height:33px;background:#eef1f7;border-radius:5px;"></div>
<svg class="i" style="left:2196.2px;top:235.8px;color:#3a3a3a" width="19" height="19"><use href="#cr"/></svg>
<svg class="i" style="left:2218px;top:234.8px;color:#3a3a3a" width="21" height="21"><use href="#fc"/></svg>
<div class="t" style="top:233.8px;font-size:18px;line-height:23px;color:#363636;left:2247px;">常规及连接元素</div>
<div style="left:2188.2px;top:264.8px;width:660.3px;height:33px;background:#eef1f7;border-radius:5px;"></div>
<svg class="i" style="left:2196.2px;top:271.8px;color:#3a3a3a" width="19" height="19"><use href="#cr"/></svg>
<svg class="i" style="left:2218px;top:270.8px;color:#3a3a3a" width="21" height="21"><use href="#fc"/></svg>
<div class="t" style="top:269.8px;font-size:18px;line-height:23px;color:#363636;left:2247px;">布尔指令</div>
<div style="left:2188.2px;top:300.8px;width:660.3px;height:33px;background:#eef1f7;border-radius:5px;"></div>
<svg class="i" style="left:2196.2px;top:307.8px;color:#3a3a3a" width="19" height="19"><use href="#cr"/></svg>
<svg class="i" style="left:2218px;top:306.8px;color:#3a3a3a" width="21" height="21"><use href="#fc"/></svg>
<div class="t" style="top:305.8px;font-size:18px;line-height:23px;color:#363636;left:2247px;">跳转指令</div>
<div style="left:2186.6px;top:437.0px;width:664.4000000000001px;height:3.5px;background:#c3d8fb;"></div>
<div style="left:2186.6px;top:441.5px;width:664.4000000000001px;height:33px;background:#e2ecfe;border-radius:0 5px 5px 0;"></div>
<div class="t" style="top:446.0px;font-size:18px;line-height:23px;color:#2a7bf4;font-weight:bold;left:2189.5px;">系统库初级指令</div>
<svg class="i" style="left:2827px;top:453.1px;" width="16" height="9.5" viewBox="0 0 16 9.5"><path d="M1 1L8 8L15 1" fill="none" stroke="#2a7bf4" stroke-width="1.7"/></svg>
<div style="left:2188.2px;top:476.5px;width:660.3px;height:33px;background:#eef1f7;border-radius:5px;"></div>
<svg class="i" style="left:2196.2px;top:483.5px;color:#3a3a3a" width="19" height="19"><use href="#cr"/></svg>
<svg class="i" style="left:2218px;top:482.5px;color:#3a3a3a" width="21" height="21"><use href="#fc"/></svg>
<div class="t" style="top:481.5px;font-size:18px;line-height:23px;color:#363636;left:2247px;">布尔逻辑运算</div>
<div class="t" style="top:481.5px;font-size:18px;line-height:23px;color:#2d2d2d;left:2763px;">V1.0</div>
<svg class="i" style="left:2815.5px;top:490px;" width="11" height="7" viewBox="0 0 11 7"><path d="M1 1L5.5 5.4L10 1" fill="none" stroke="#d4d6dc" stroke-width="1.6"/></svg>
<div style="left:2188.2px;top:512.5px;width:660.3px;height:33px;background:#eef1f7;border-radius:5px;"></div>
<svg class="i" style="left:2196.2px;top:519.5px;color:#3a3a3a" width="19" height="19"><use href="#cr"/></svg>
<svg class="i" style="left:2218px;top:518.5px;color:#3a3a3a" width="21" height="21"><use href="#fc"/></svg>
<div class="t" style="top:517.5px;font-size:18px;line-height:23px;color:#363636;left:2247px;">计数器</div>
<div class="t" style="top:517.5px;font-size:18px;line-height:23px;color:#2d2d2d;left:2763px;">V1.0</div>
<svg class="i" style="left:2815.5px;top:526px;" width="11" height="7" viewBox="0 0 11 7"><path d="M1 1L5.5 5.4L10 1" fill="none" stroke="#d4d6dc" stroke-width="1.6"/></svg>
<div style="left:2188.2px;top:548.5px;width:660.3px;height:33px;background:#eef1f7;border-radius:5px;"></div>
<svg class="i" style="left:2196.2px;top:555.5px;color:#3a3a3a" width="19" height="19"><use href="#cr"/></svg>
<svg class="i" style="left:2218px;top:554.5px;color:#3a3a3a" width="21" height="21"><use href="#fc"/></svg>
<div class="t" style="top:553.5px;font-size:18px;line-height:23px;color:#363636;left:2247px;">定时器</div>
<div class="t" style="top:553.5px;font-size:18px;line-height:23px;color:#2d2d2d;left:2763px;">V1.0</div>
<svg class="i" style="left:2815.5px;top:562px;" width="11" height="7" viewBox="0 0 11 7"><path d="M1 1L5.5 5.4L10 1" fill="none" stroke="#d4d6dc" stroke-width="1.6"/></svg>
<div style="left:2188.2px;top:584.5px;width:660.3px;height:33px;background:#eef1f7;border-radius:5px;"></div>
<svg class="i" style="left:2196.2px;top:591.5px;color:#3a3a3a" width="19" height="19"><use href="#cr"/></svg>
<svg class="i" style="left:2218px;top:590.5px;color:#3a3a3a" width="21" height="21"><use href="#fc"/></svg>
<div class="t" style="top:589.5px;font-size:18px;line-height:23px;color:#363636;left:2247px;">数值运算</div>
<div class="t" style="top:589.5px;font-size:18px;line-height:23px;color:#2d2d2d;left:2763px;">V1.0</div>
<svg class="i" style="left:2815.5px;top:598px;" width="11" height="7" viewBox="0 0 11 7"><path d="M1 1L5.5 5.4L10 1" fill="none" stroke="#d4d6dc" stroke-width="1.6"/></svg>
<div style="left:2188.2px;top:620.5px;width:660.3px;height:33px;background:#eef1f7;border-radius:5px;"></div>
<svg class="i" style="left:2196.2px;top:627.5px;color:#3a3a3a" width="19" height="19"><use href="#cr"/></svg>
<svg class="i" style="left:2218px;top:626.5px;color:#3a3a3a" width="21" height="21"><use href="#fc"/></svg>
<div class="t" style="top:625.5px;font-size:18px;line-height:23px;color:#363636;left:2247px;">算术运算</div>
<div class="t" style="top:625.5px;font-size:18px;line-height:23px;color:#2d2d2d;left:2763px;">V1.0</div>
<svg class="i" style="left:2815.5px;top:634px;" width="11" height="7" viewBox="0 0 11 7"><path d="M1 1L5.5 5.4L10 1" fill="none" stroke="#d4d6dc" stroke-width="1.6"/></svg>
<div style="left:2188.2px;top:656.5px;width:660.3px;height:33px;background:#eef1f7;border-radius:5px;"></div>
<svg class="i" style="left:2196.2px;top:663.5px;color:#3a3a3a" width="19" height="19"><use href="#cr"/></svg>
<svg class="i" style="left:2218px;top:662.5px;color:#3a3a3a" width="21" height="21"><use href="#fc"/></svg>
<div class="t" style="top:661.5px;font-size:18px;line-height:23px;color:#363636;left:2247px;">串移位运算</div>
<div class="t" style="top:661.5px;font-size:18px;line-height:23px;color:#2d2d2d;left:2763px;">V1.0</div>
<svg class="i" style="left:2815.5px;top:670px;" width="11" height="7" viewBox="0 0 11 7"><path d="M1 1L5.5 5.4L10 1" fill="none" stroke="#d4d6dc" stroke-width="1.6"/></svg>
<div style="left:2188.2px;top:692.5px;width:660.3px;height:33px;background:#eef1f7;border-radius:5px;"></div>
<svg class="i" style="left:2196.2px;top:699.5px;color:#3a3a3a" width="19" height="19"><use href="#cr"/></svg>
<svg class="i" style="left:2218px;top:698.5px;color:#3a3a3a" width="21" height="21"><use href="#fc"/></svg>
<div class="t" style="top:697.5px;font-size:18px;line-height:23px;color:#363636;left:2247px;">位逻辑运算</div>
<div class="t" style="top:697.5px;font-size:18px;line-height:23px;color:#2d2d2d;left:2763px;">V1.0</div>
<svg class="i" style="left:2815.5px;top:706px;" width="11" height="7" viewBox="0 0 11 7"><path d="M1 1L5.5 5.4L10 1" fill="none" stroke="#d4d6dc" stroke-width="1.6"/></svg>
<div style="left:2188.2px;top:728.5px;width:660.3px;height:33px;background:#eef1f7;border-radius:5px;"></div>
<svg class="i" style="left:2195.2px;top:736.1px;color:#2a7bf4" width="19" height="19"><use href="#cd"/></svg>
<svg class="i" style="left:2221px;top:738.1px;color:#2a7bf4" width="18" height="15.1"><use href="#fo"/></svg>
<div class="t" style="top:733.5px;font-size:18px;line-height:23px;color:#2a7bf4;left:2247px;">位组装指令</div>
<div class="t" style="top:733.5px;font-size:18px;line-height:23px;color:#2d2d2d;left:2763px;">V1.0</div>
<svg class="i" style="left:2815.5px;top:742px;" width="11" height="7" viewBox="0 0 11 7"><path d="M1 1L5.5 5.4L10 1" fill="none" stroke="#d4d6dc" stroke-width="1.6"/></svg>
<svg class="i" style="left:2232.6px;top:772.2px;" width="18" height="18" viewBox="0 0 18 18"><g fill="none" stroke="#222" stroke-width="1.5"><rect x="3.2" y="1" width="13" height="15.2" rx=".4"/><path d="M3.2 5.4H16.2M.4 5.4H3.2M16.2 5.4H18.4M.4 10.8H3.2"/></g></svg>
<div class="t" style="top:769.5px;font-size:18px;line-height:23px;color:#2d2d2d;left:2258.5px;">PACK_BITS_TO_BYTE</div>
<svg class="i" style="left:2812px;top:771px;" width="20" height="19.5" viewBox="0 0 20 19.5"><path d="M10 1.4L12.5 6.8L18.4 7.5Q19.4 7.8 18.6 8.6L14.4 12.6L15.5 18.2Q15.6 19.3 14.6 18.8L10 16L5.4 18.8Q4.4 19.3 4.5 18.2L5.6 12.6L1.4 8.6Q.6 7.8 1.6 7.5L7.5 6.8Z" fill="none" stroke="#f5d327" stroke-width="1.8" stroke-linejoin="round"/></svg>
<svg class="i" style="left:2232.6px;top:808.2px;" width="18" height="18" viewBox="0 0 18 18"><g fill="none" stroke="#222" stroke-width="1.5"><rect x="3.2" y="1" width="13" height="15.2" rx=".4"/><path d="M3.2 5.4H16.2M.4 5.4H3.2M16.2 5.4H18.4M.4 10.8H3.2"/></g></svg>
<div class="t" style="top:805.5px;font-size:18px;line-height:23px;color:#2d2d2d;left:2258.5px;">PACK_BITS_TO_WORD</div>
<svg class="i" style="left:2812px;top:807px;" width="20" height="19.5" viewBox="0 0 20 19.5"><path d="M10 1.4L12.5 6.8L18.4 7.5Q19.4 7.8 18.6 8.6L14.4 12.6L15.5 18.2Q15.6 19.3 14.6 18.8L10 16L5.4 18.8Q4.4 19.3 4.5 18.2L5.6 12.6L1.4 8.6Q.6 7.8 1.6 7.5L7.5 6.8Z" fill="none" stroke="#f5d327" stroke-width="1.8" stroke-linejoin="round"/></svg>
<svg class="i" style="left:2232.6px;top:844.2px;" width="18" height="18" viewBox="0 0 18 18"><g fill="none" stroke="#222" stroke-width="1.5"><rect x="3.2" y="1" width="13" height="15.2" rx=".4"/><path d="M3.2 5.4H16.2M.4 5.4H3.2M16.2 5.4H18.4M.4 10.8H3.2"/></g></svg>
<div class="t" style="top:841.5px;font-size:18px;line-height:23px;color:#2d2d2d;left:2258.5px;">PACK_BITS_TO_DWORD</div>
<svg class="i" style="left:2812px;top:843px;" width="20" height="19.5" viewBox="0 0 20 19.5"><path d="M10 1.4L12.5 6.8L18.4 7.5Q19.4 7.8 18.6 8.6L14.4 12.6L15.5 18.2Q15.6 19.3 14.6 18.8L10 16L5.4 18.8Q4.4 19.3 4.5 18.2L5.6 12.6L1.4 8.6Q.6 7.8 1.6 7.5L7.5 6.8Z" fill="none" stroke="#f5d327" stroke-width="1.8" stroke-linejoin="round"/></svg>
<svg class="i" style="left:2232.6px;top:880.2px;" width="18" height="18" viewBox="0 0 18 18"><g fill="none" stroke="#222" stroke-width="1.5"><rect x="3.2" y="1" width="13" height="15.2" rx=".4"/><path d="M3.2 5.4H16.2M.4 5.4H3.2M16.2 5.4H18.4M.4 10.8H3.2"/></g></svg>
<div class="t" style="top:877.5px;font-size:18px;line-height:23px;color:#2d2d2d;left:2258.5px;">PACK_BYTES_TO_WORD</div>
<svg class="i" style="left:2812px;top:879px;" width="20" height="19.5" viewBox="0 0 20 19.5"><path d="M10 1.4L12.5 6.8L18.4 7.5Q19.4 7.8 18.6 8.6L14.4 12.6L15.5 18.2Q15.6 19.3 14.6 18.8L10 16L5.4 18.8Q4.4 19.3 4.5 18.2L5.6 12.6L1.4 8.6Q.6 7.8 1.6 7.5L7.5 6.8Z" fill="none" stroke="#f5d327" stroke-width="1.8" stroke-linejoin="round"/></svg>
<svg class="i" style="left:2232.6px;top:916.2px;" width="18" height="18" viewBox="0 0 18 18"><g fill="none" stroke="#222" stroke-width="1.5"><rect x="3.2" y="1" width="13" height="15.2" rx=".4"/><path d="M3.2 5.4H16.2M.4 5.4H3.2M16.2 5.4H18.4M.4 10.8H3.2"/></g></svg>
<div class="t" style="top:913.5px;font-size:18px;line-height:23px;color:#2d2d2d;left:2258.5px;">PACK_BYTES_TO_DWORD</div>
<svg class="i" style="left:2812px;top:915px;" width="20" height="19.5" viewBox="0 0 20 19.5"><path d="M10 1.4L12.5 6.8L18.4 7.5Q19.4 7.8 18.6 8.6L14.4 12.6L15.5 18.2Q15.6 19.3 14.6 18.8L10 16L5.4 18.8Q4.4 19.3 4.5 18.2L5.6 12.6L1.4 8.6Q.6 7.8 1.6 7.5L7.5 6.8Z" fill="none" stroke="#f5d327" stroke-width="1.8" stroke-linejoin="round"/></svg>
<div style="left:2188.2px;top:944.5px;width:660.3px;height:33px;background:#cfe0fd;border-radius:5px;"></div>
<svg class="i" style="left:2232.6px;top:952.2px;" width="18" height="18" viewBox="0 0 18 18"><g fill="none" stroke="#222" stroke-width="1.5"><rect x="3.2" y="1" width="13" height="15.2" rx=".4"/><path d="M3.2 5.4H16.2M.4 5.4H3.2M16.2 5.4H18.4M.4 10.8H3.2"/></g></svg>
<div class="t" style="top:949.5px;font-size:18px;line-height:23px;color:#2d2d2d;left:2258.5px;">PACK_WORDS_TO_DWORD</div>
<svg class="i" style="left:2812px;top:951px;" width="20" height="19.5" viewBox="0 0 20 19.5"><path d="M10 1.4L12.5 6.8L18.4 7.5Q19.4 7.8 18.6 8.6L14.4 12.6L15.5 18.2Q15.6 19.3 14.6 18.8L10 16L5.4 18.8Q4.4 19.3 4.5 18.2L5.6 12.6L1.4 8.6Q.6 7.8 1.6 7.5L7.5 6.8Z" fill="none" stroke="#f5d327" stroke-width="1.8" stroke-linejoin="round"/></svg>
<svg class="i" style="left:2232.6px;top:988.2px;" width="18" height="18" viewBox="0 0 18 18"><g fill="none" stroke="#222" stroke-width="1.5"><rect x="3.2" y="1" width="13" height="15.2" rx=".4"/><path d="M3.2 5.4H16.2M.4 5.4H3.2M16.2 5.4H18.4M.4 10.8H3.2"/></g></svg>
<div class="t" style="top:985.5px;font-size:18px;line-height:23px;color:#2d2d2d;left:2258.5px;">UNPACK_BYTE_TO_BIT</div>
<svg class="i" style="left:2812px;top:987px;" width="20" height="19.5" viewBox="0 0 20 19.5"><path d="M10 1.4L12.5 6.8L18.4 7.5Q19.4 7.8 18.6 8.6L14.4 12.6L15.5 18.2Q15.6 19.3 14.6 18.8L10 16L5.4 18.8Q4.4 19.3 4.5 18.2L5.6 12.6L1.4 8.6Q.6 7.8 1.6 7.5L7.5 6.8Z" fill="none" stroke="#f5d327" stroke-width="1.8" stroke-linejoin="round"/></svg>
<svg class="i" style="left:2232.6px;top:1024.2px;" width="18" height="18" viewBox="0 0 18 18"><g fill="none" stroke="#222" stroke-width="1.5"><rect x="3.2" y="1" width="13" height="15.2" rx=".4"/><path d="M3.2 5.4H16.2M.4 5.4H3.2M16.2 5.4H18.4M.4 10.8H3.2"/></g></svg>
<div class="t" style="top:1021.5px;font-size:18px;line-height:23px;color:#2d2d2d;left:2258.5px;">UNPACK_WORD_TO_BIT</div>
<svg class="i" style="left:2812px;top:1023px;" width="20" height="19.5" viewBox="0 0 20 19.5"><path d="M10 1.4L12.5 6.8L18.4 7.5Q19.4 7.8 18.6 8.6L14.4 12.6L15.5 18.2Q15.6 19.3 14.6 18.8L10 16L5.4 18.8Q4.4 19.3 4.5 18.2L5.6 12.6L1.4 8.6Q.6 7.8 1.6 7.5L7.5 6.8Z" fill="none" stroke="#f5d327" stroke-width="1.8" stroke-linejoin="round"/></svg>
<svg class="i" style="left:2232.6px;top:1060.2px;" width="18" height="18" viewBox="0 0 18 18"><g fill="none" stroke="#222" stroke-width="1.5"><rect x="3.2" y="1" width="13" height="15.2" rx=".4"/><path d="M3.2 5.4H16.2M.4 5.4H3.2M16.2 5.4H18.4M.4 10.8H3.2"/></g></svg>
<div class="t" style="top:1057.5px;font-size:18px;line-height:23px;color:#2d2d2d;left:2258.5px;">UNPACK_DWORD_TO_BIT</div>
<svg class="i" style="left:2812px;top:1059px;" width="20" height="19.5" viewBox="0 0 20 19.5"><path d="M10 1.4L12.5 6.8L18.4 7.5Q19.4 7.8 18.6 8.6L14.4 12.6L15.5 18.2Q15.6 19.3 14.6 18.8L10 16L5.4 18.8Q4.4 19.3 4.5 18.2L5.6 12.6L1.4 8.6Q.6 7.8 1.6 7.5L7.5 6.8Z" fill="none" stroke="#f5d327" stroke-width="1.8" stroke-linejoin="round"/></svg>
<svg class="i" style="left:2232.6px;top:1096.2px;" width="18" height="18" viewBox="0 0 18 18"><g fill="none" stroke="#222" stroke-width="1.5"><rect x="3.2" y="1" width="13" height="15.2" rx=".4"/><path d="M3.2 5.4H16.2M.4 5.4H3.2M16.2 5.4H18.4M.4 10.8H3.2"/></g><rect x="3.2" y="1" width="13" height="4.4" fill="#222"/></svg>
<div class="t" style="top:1093.5px;font-size:18px;line-height:23px;color:#2d2d2d;left:2258.5px;">UNPACK_BYTE</div>
<svg class="i" style="left:2812px;top:1095px;" width="20" height="19.5" viewBox="0 0 20 19.5"><path d="M10 1.4L12.5 6.8L18.4 7.5Q19.4 7.8 18.6 8.6L14.4 12.6L15.5 18.2Q15.6 19.3 14.6 18.8L10 16L5.4 18.8Q4.4 19.3 4.5 18.2L5.6 12.6L1.4 8.6Q.6 7.8 1.6 7.5L7.5 6.8Z" fill="none" stroke="#f5d327" stroke-width="1.8" stroke-linejoin="round"/></svg>
<svg class="i" style="left:2232.6px;top:1132.2px;" width="18" height="18" viewBox="0 0 18 18"><g fill="none" stroke="#222" stroke-width="1.5"><rect x="3.2" y="1" width="13" height="15.2" rx=".4"/><path d="M3.2 5.4H16.2M.4 5.4H3.2M16.2 5.4H18.4M.4 10.8H3.2"/></g><rect x="3.2" y="1" width="13" height="4.4" fill="#222"/></svg>
<div class="t" style="top:1129.5px;font-size:18px;line-height:23px;color:#2d2d2d;left:2258.5px;">UNPACK_WORD</div>
<svg class="i" style="left:2812px;top:1131px;" width="20" height="19.5" viewBox="0 0 20 19.5"><path d="M10 1.4L12.5 6.8L18.4 7.5Q19.4 7.8 18.6 8.6L14.4 12.6L15.5 18.2Q15.6 19.3 14.6 18.8L10 16L5.4 18.8Q4.4 19.3 4.5 18.2L5.6 12.6L1.4 8.6Q.6 7.8 1.6 7.5L7.5 6.8Z" fill="none" stroke="#f5d327" stroke-width="1.8" stroke-linejoin="round"/></svg>
<svg class="i" style="left:2232.6px;top:1168.2px;" width="18" height="18" viewBox="0 0 18 18"><g fill="none" stroke="#222" stroke-width="1.5"><rect x="3.2" y="1" width="13" height="15.2" rx=".4"/><path d="M3.2 5.4H16.2M.4 5.4H3.2M16.2 5.4H18.4M.4 10.8H3.2"/></g><rect x="3.2" y="1" width="13" height="4.4" fill="#222"/></svg>
<div class="t" style="top:1165.5px;font-size:18px;line-height:23px;color:#2d2d2d;left:2258.5px;">UNPACK_DWORD</div>
<svg class="i" style="left:2812px;top:1167px;" width="20" height="19.5" viewBox="0 0 20 19.5"><path d="M10 1.4L12.5 6.8L18.4 7.5Q19.4 7.8 18.6 8.6L14.4 12.6L15.5 18.2Q15.6 19.3 14.6 18.8L10 16L5.4 18.8Q4.4 19.3 4.5 18.2L5.6 12.6L1.4 8.6Q.6 7.8 1.6 7.5L7.5 6.8Z" fill="none" stroke="#f5d327" stroke-width="1.8" stroke-linejoin="round"/></svg>
<div style="left:2188.2px;top:1196.5px;width:660.3px;height:33px;background:#eef1f7;border-radius:5px;"></div>
<svg class="i" style="left:2196.2px;top:1203.5px;color:#3a3a3a" width="19" height="19"><use href="#cr"/></svg>
<svg class="i" style="left:2218px;top:1202.5px;color:#3a3a3a" width="21" height="21"><use href="#fc"/></svg>
<div class="t" style="top:1201.5px;font-size:18px;line-height:23px;color:#363636;left:2247px;">选择语句</div>
<div class="t" style="top:1201.5px;font-size:18px;line-height:23px;color:#2d2d2d;left:2763px;">V1.0</div>
<svg class="i" style="left:2815.5px;top:1210px;" width="11" height="7" viewBox="0 0 11 7"><path d="M1 1L5.5 5.4L10 1" fill="none" stroke="#d4d6dc" stroke-width="1.6"/></svg>
<div style="left:2188.2px;top:1232.5px;width:660.3px;height:33px;background:#eef1f7;border-radius:5px;"></div>
<svg class="i" style="left:2196.2px;top:1239.5px;color:#3a3a3a" width="19" height="19"><use href="#cr"/></svg>
<svg class="i" style="left:2218px;top:1238.5px;color:#3a3a3a" width="21" height="21"><use href="#fc"/></svg>
<div class="t" style="top:1237.5px;font-size:18px;line-height:23px;color:#363636;left:2247px;">比较语句</div>
<div class="t" style="top:1237.5px;font-size:18px;line-height:23px;color:#2d2d2d;left:2763px;">V1.0</div>
<svg class="i" style="left:2815.5px;top:1246px;" width="11" height="7" viewBox="0 0 11 7"><path d="M1 1L5.5 5.4L10 1" fill="none" stroke="#d4d6dc" stroke-width="1.6"/></svg>
<div style="left:2188.2px;top:1268.5px;width:660.3px;height:33px;background:#eef1f7;border-radius:5px;"></div>
<svg class="i" style="left:2196.2px;top:1275.5px;color:#3a3a3a" width="19" height="19"><use href="#cr"/></svg>
<svg class="i" style="left:2218px;top:1274.5px;color:#3a3a3a" width="21" height="21"><use href="#fc"/></svg>
<div class="t" style="top:1273.5px;font-size:18px;line-height:23px;color:#363636;left:2247px;">字符串运算</div>
<div class="t" style="top:1273.5px;font-size:18px;line-height:23px;color:#2d2d2d;left:2763px;">V1.0</div>
<svg class="i" style="left:2815.5px;top:1282px;" width="11" height="7" viewBox="0 0 11 7"><path d="M1 1L5.5 5.4L10 1" fill="none" stroke="#d4d6dc" stroke-width="1.6"/></svg>
<div style="left:2188.2px;top:1304.5px;width:660.3px;height:33px;background:#eef1f7;border-radius:5px;"></div>
<svg class="i" style="left:2196.2px;top:1311.5px;color:#3a3a3a" width="19" height="19"><use href="#cr"/></svg>
<svg class="i" style="left:2218px;top:1310.5px;color:#3a3a3a" width="21" height="21"><use href="#fc"/></svg>
<div class="t" style="top:1309.5px;font-size:18px;line-height:23px;color:#363636;left:2247px;">数据转换语句</div>
<div class="t" style="top:1309.5px;font-size:18px;line-height:23px;color:#2d2d2d;left:2763px;">V1.0</div>
<svg class="i" style="left:2815.5px;top:1318px;" width="11" height="7" viewBox="0 0 11 7"><path d="M1 1L5.5 5.4L10 1" fill="none" stroke="#d4d6dc" stroke-width="1.6"/></svg>
<div style="left:2188.2px;top:1340.5px;width:660.3px;height:33px;background:#eef1f7;border-radius:5px;"></div>
<svg class="i" style="left:2196.2px;top:1347.5px;color:#3a3a3a" width="19" height="19"><use href="#cr"/></svg>
<svg class="i" style="left:2218px;top:1346.5px;color:#3a3a3a" width="21" height="21"><use href="#fc"/></svg>
<div class="t" style="top:1345.5px;font-size:18px;line-height:23px;color:#363636;left:2247px;">数组及结构体函数</div>
<div class="t" style="top:1345.5px;font-size:18px;line-height:23px;color:#2d2d2d;left:2763px;">V1.0</div>
<svg class="i" style="left:2815.5px;top:1354px;" width="11" height="7" viewBox="0 0 11 7"><path d="M1 1L5.5 5.4L10 1" fill="none" stroke="#d4d6dc" stroke-width="1.6"/></svg>
<div style="left:2188.2px;top:1376.5px;width:660.3px;height:33px;background:#eef1f7;border-radius:5px;"></div>
<svg class="i" style="left:2196.2px;top:1383.5px;color:#3a3a3a" width="19" height="19"><use href="#cr"/></svg>
<svg class="i" style="left:2218px;top:1382.5px;color:#3a3a3a" width="21" height="21"><use href="#fc"/></svg>
<div class="t" style="top:1381.5px;font-size:18px;line-height:23px;color:#363636;left:2247px;">标准验证功能</div>
<div class="t" style="top:1381.5px;font-size:18px;line-height:23px;color:#2d2d2d;left:2763px;">V1.0</div>
<svg class="i" style="left:2815.5px;top:1390px;" width="11" height="7" viewBox="0 0 11 7"><path d="M1 1L5.5 5.4L10 1" fill="none" stroke="#d4d6dc" stroke-width="1.6"/></svg>
<div style="left:2186.6px;top:1468.5px;width:664.4000000000001px;height:3.5px;background:#c3d8fb;"></div>
<div style="left:2186.6px;top:1473px;width:664.4000000000001px;height:33px;background:#e2ecfe;border-radius:0 5px 5px 0;"></div>
<div class="t" style="top:1477.5px;font-size:18px;line-height:23px;color:#2a7bf4;font-weight:bold;left:2189.5px;">系统库高级指令</div>
<svg class="i" style="left:2827px;top:1484.6px;" width="16" height="9.5" viewBox="0 0 16 9.5"><path d="M1 1L8 8L15 1" fill="none" stroke="#2a7bf4" stroke-width="1.7"/></svg>
<div style="left:2188.2px;top:1508.5px;width:660.3px;height:33px;background:#eef1f7;border-radius:5px;"></div>
<svg class="i" style="left:2196.2px;top:1515.5px;color:#3a3a3a" width="19" height="19"><use href="#cr"/></svg>
<svg class="i" style="left:2218px;top:1514.5px;color:#3a3a3a" width="21" height="21"><use href="#fc"/></svg>
<div class="t" style="top:1513.5px;font-size:18px;line-height:23px;color:#363636;left:2247px;">日期和时间函数</div>
<div class="t" style="top:1513.5px;font-size:18px;line-height:23px;color:#2d2d2d;left:2763px;">V1.0</div>
<svg class="i" style="left:2815.5px;top:1522px;" width="11" height="7" viewBox="0 0 11 7"><path d="M1 1L5.5 5.4L10 1" fill="none" stroke="#d4d6dc" stroke-width="1.6"/></svg>
<div style="left:2188.2px;top:1544.5px;width:660.3px;height:33px;background:#eef1f7;border-radius:5px;"></div>
<svg class="i" style="left:2196.2px;top:1551.5px;color:#3a3a3a" width="19" height="19"><use href="#cr"/></svg>
<svg class="i" style="left:2218px;top:1550.5px;color:#3a3a3a" width="21" height="21"><use href="#fc"/></svg>
<div class="t" style="top:1549.5px;font-size:18px;line-height:23px;color:#363636;left:2247px;">系统与诊断函数</div>
<div class="t" style="top:1549.5px;font-size:18px;line-height:23px;color:#2d2d2d;left:2763px;">V1.0</div>
<svg class="i" style="left:2815.5px;top:1558px;" width="11" height="7" viewBox="0 0 11 7"><path d="M1 1L5.5 5.4L10 1" fill="none" stroke="#d4d6dc" stroke-width="1.6"/></svg>
<div style="left:2188.2px;top:1580.5px;width:660.3px;height:33px;background:#eef1f7;border-radius:5px;"></div>
<svg class="i" style="left:2196.2px;top:1587.5px;color:#3a3a3a" width="19" height="19"><use href="#cr"/></svg>
<svg class="i" style="left:2218px;top:1586.5px;color:#3a3a3a" width="21" height="21"><use href="#fc"/></svg>
<div class="t" style="top:1585.5px;font-size:18px;line-height:23px;color:#363636;left:2247px;">通讯函数</div>
<div class="t" style="top:1585.5px;font-size:18px;line-height:23px;color:#2d2d2d;left:2763px;">V1.0</div>
<svg class="i" style="left:2815.5px;top:1594px;" width="11" height="7" viewBox="0 0 11 7"><path d="M1 1L5.5 5.4L10 1" fill="none" stroke="#d4d6dc" stroke-width="1.6"/></svg>
<div style="left:2186.6px;top:1717.0px;width:664.4000000000001px;height:3.5px;background:#c3d8fb;"></div>
<div style="left:2186.6px;top:1721.5px;width:664.4000000000001px;height:33px;background:#e2ecfe;border-radius:0 5px 5px 0;"></div>
<div class="t" style="top:1726.0px;font-size:18px;line-height:23px;color:#2a7bf4;font-weight:bold;left:2189.5px;">系统库工艺指令</div>
<svg class="i" style="left:2827px;top:1733.1px;" width="16" height="9.5" viewBox="0 0 16 9.5"><path d="M1 1L8 8L15 1" fill="none" stroke="#2a7bf4" stroke-width="1.7"/></svg>
<div style="left:0px;top:1751px;width:2895px;height:31px;background:#007acc;"></div>
<div class="t" style="top:1759.0px;font-size:18px;line-height:23px;color:#ffffff;left:17.5px;">语言服务空闲</div>
<svg class="i" style="left:145px;top:1760.3px;" width="18.4" height="18.4" viewBox="0 0 18.4 18.4"><g fill="none" stroke="#fff" stroke-width="1.5"><circle cx="9.2" cy="9.2" r="8.3"/><path d="M5.6 5.6L12.8 12.8M12.8 5.6L5.6 12.8"/></g></svg>
<div class="t" style="top:1758.0px;font-size:18px;line-height:23px;color:#ffffff;left:169.2px;">0</div>
<svg class="i" style="left:185px;top:1760.1px;" width="18.4" height="17.6" viewBox="0 0 18.4 17.6"><g fill="none" stroke="#fff" stroke-width="1.5" stroke-linejoin="round"><path d="M9.2 1.2L17.6 16.8H.8Z"/><path d="M9.2 6.6V11.8M9.2 13.2V15"/></g></svg>
<div class="t" style="top:1758.0px;font-size:18px;line-height:23px;color:#ffffff;left:209.3px;">0</div>
<div class="t" style="top:1758.0px;font-size:18px;line-height:23px;color:#ffffff;left:237px;">ClientID-23ffc5f2-80ef-4df2-a4b0-12904e7cd91a</div>
<svg class="i" style="left:2639px;top:1760px;" width="19" height="19.5" viewBox="0 0 19 19.5"><path d="M9 1.6Q3.6 2.6 3.6 9V13L1.2 16.2H16.2L14 13V9" fill="none" stroke="#fff" stroke-width="1.6" stroke-linejoin="round"/><path d="M6.4 17.4Q8.8 20 11.2 17.4Z" fill="#fff"/><circle cx="13.6" cy="4.6" r="4" fill="#fff"/></svg>
<div class="t" style="top:1758.0px;font-size:18px;line-height:23px;color:#ffffff;left:2663.5px;">11</div>
<svg class="i" style="left:2710px;top:1761px;" width="19.5" height="17" viewBox="0 0 19.5 17"><rect x=".9" y=".9" width="17.6" height="15" fill="none" stroke="#fff" stroke-width="1.7"/><path d="M.9 5H18.5" stroke="#fff" stroke-width="1.7"/></svg>
<svg class="i" style="left:2748px;top:1755px;" width="25" height="24" viewBox="0 0 25 24"><g fill="none" stroke="#fff" stroke-width="1.2"><rect x="9.6" y=".7" width="13.6" height="16.8"/><path d="M13 .7V8M15.2 3.2v5M17.4 3.2v5"/><rect x="19" y="3.2" width="2.2" height="5"/><path d="M15.6 11h6M15.6 13.4h6M15.6 15.6h6" stroke-dasharray="1.2 .8"/><rect x=".7" y="9.6" width="13.2" height="9.2" rx="1.6" fill="#007acc"/><path d="M3.6 14.2l2.6 2.4 4.4-4.8" stroke-width="1.4"/><path d="M.4 22.6h4.2M9.6 22.6h4.6M7.2 18.8v2.4"/></g><rect x="5.6" y="21" width="3.4" height="2.8" fill="#fff"/></svg>
<div class="t" style="top:1758.0px;font-size:18px;line-height:23px;color:#ffffff;left:2786.5px;">在线设备</div>
<div class="t" style="top:1750.0px;font-size:26px;line-height:34px;color:#ffffff;font-weight:bold;left:2868.5px;">1</div>
<div style="left:2748px;top:1781px;width:135px;height:1px;background:#fff;"></div>
</body></html>
